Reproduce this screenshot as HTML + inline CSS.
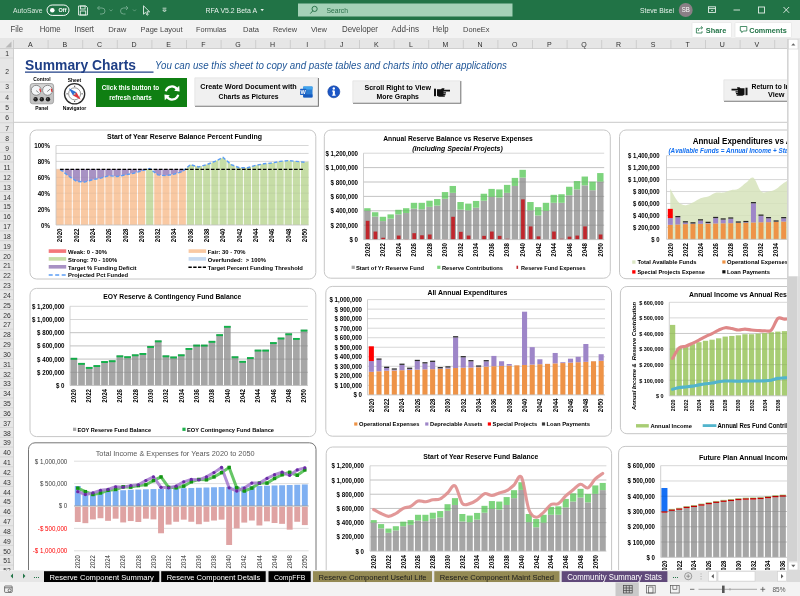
<!DOCTYPE html>
<html><head><meta charset="utf-8"><title>RFA V5.2 Beta A - Excel</title>
<style>
html,body{margin:0;padding:0;background:#fff;}
body{width:800px;height:596px;overflow:hidden;position:relative;font-family:"Liberation Sans", sans-serif;}
svg text{font-family:"Liberation Sans", sans-serif;}
#app{position:absolute;left:0;top:0;width:800px;height:596px;overflow:hidden;background:#fff;}
.abs{position:absolute;}
svg{will-change:transform;}
#titlebar{left:0;top:0;width:800px;height:20px;background:#217346;}
#ribbon{left:0;top:20px;width:800px;height:18.3px;background:#f3f3f3;}
#colhdr{left:0;top:38.3px;width:800px;height:10.5px;background:#e6e6e6;border-bottom:1px solid #cfcfcf;box-sizing:border-box;}
#rowhdr{left:0;top:48.8px;width:14px;height:521.6px;background:#e6e6e6;border-right:1px solid #cfcfcf;box-sizing:border-box;}
#tabbar{left:0;top:570px;width:800px;height:12px;background:#e6e6e6;}
#status{left:0;top:582px;width:800px;height:14px;background:#f3f3f3;}
.tab{position:absolute;top:1px;height:10px;line-height:10px;font-size:8.6px;text-align:center;white-space:nowrap;overflow:hidden;}
</style></head>
<body><div id="app">
<div id="sheet" class="abs" style="left:0;top:0;width:800px;height:596px;"><svg class="abs" style="left:0;top:0" width="800" height="596" viewBox="0 0 800 596"><defs><clipPath id="sheetclip"><rect x="14" y="49" width="773" height="521"/></clipPath></defs><g clip-path="url(#sheetclip)"><text x="25.00" y="70.30" text-anchor="start" fill="#1f3f86" style="white-space:pre;font-size:14.90px;font-weight:bold;" textLength="111.00" lengthAdjust="spacingAndGlyphs">Summary Charts</text><line x1="25" x2="153.5" y1="72.1" y2="72.1" stroke="#1f3f86" stroke-width="1.3"/><text x="155.00" y="69.40" text-anchor="start" fill="#1f5597" style="white-space:pre;font-size:10.23px;font-style:italic;" textLength="352.00" lengthAdjust="spacingAndGlyphs">You can use this sheet to copy and paste tables and charts into other applications</text><line x1="14" x2="787" y1="122.3" y2="122.3" stroke="#c8c8c8" stroke-width="1"/><text x="42.00" y="81.30" text-anchor="middle" fill="#000" style="white-space:pre;font-size:5.17px;font-weight:bold;" textLength="17.50" lengthAdjust="spacingAndGlyphs">Control</text><text x="41.80" y="110.20" text-anchor="middle" fill="#000" style="white-space:pre;font-size:5.23px;font-weight:bold;" textLength="13.30" lengthAdjust="spacingAndGlyphs">Panel</text><rect x="30.2" y="83.5" width="23.4" height="20.3" rx="2.5" fill="#c2c2c2" stroke="#9a9a9a" stroke-width="0.8"/><rect x="31" y="84.2" width="21.8" height="9" rx="2" fill="#d4d4d4"/><circle cx="36.2" cy="90.3" r="5" fill="#f4f6f8" stroke="#8a8a8a" stroke-width="1"/><circle cx="47.6" cy="90.3" r="5" fill="#f4f6f8" stroke="#8a8a8a" stroke-width="1"/><path d="M39.8,88.6 L40.6,91.8" stroke="#e03030" stroke-width="1.2"/><path d="M51.2,88.6 L52,91.8" stroke="#e03030" stroke-width="1.2"/><line x1="36.2" y1="90.6" x2="38.6" y2="92.6" stroke="#555" stroke-width="0.7"/><line x1="47.2" y1="91.6" x2="50" y2="89.2" stroke="#555" stroke-width="0.7"/><circle cx="35.6" cy="99.2" r="2.2" fill="#1e1e1e"/><circle cx="35.1" cy="98.7" r="0.7" fill="#666"/><circle cx="41.8" cy="99.2" r="2.2" fill="#1e1e1e"/><circle cx="41.3" cy="98.7" r="0.7" fill="#666"/><circle cx="48" cy="99.2" r="2.2" fill="#1e1e1e"/><circle cx="47.5" cy="98.7" r="0.7" fill="#666"/><text x="74.50" y="81.80" text-anchor="middle" fill="#000" style="white-space:pre;font-size:5.21px;font-weight:bold;" textLength="13.50" lengthAdjust="spacingAndGlyphs">Sheet</text><text x="74.50" y="110.20" text-anchor="middle" fill="#000" style="white-space:pre;font-size:5.35px;font-weight:bold;" textLength="23.50" lengthAdjust="spacingAndGlyphs">Navigator</text><circle cx="74.6" cy="93.8" r="10.1" fill="#fff" stroke="#2b2b2b" stroke-width="1.3"/><circle cx="74.6" cy="93.8" r="6" fill="none" stroke="#8a8a8a" stroke-width="0.9"/><rect x="74.0" y="85.7" width="1.2" height="1.2" fill="#555"/><rect x="74.0" y="100.7" width="1.2" height="1.2" fill="#555"/><rect x="66.5" y="93.2" width="1.2" height="1.2" fill="#555"/><rect x="81.5" y="93.2" width="1.2" height="1.2" fill="#555"/><path d="M68.8,88.3 L76.4,92.2 L73,95.6 Z" fill="#2f6fd6"/><path d="M80.6,99.6 L73,95.6 L76.4,92.2 Z" fill="#e0333f"/><circle cx="74.7" cy="93.9" r="0.9" fill="#fff" stroke="#444" stroke-width="0.4"/><rect x="96" y="78" width="91" height="29" fill="#0f7f12"/><text x="130.50" y="90.20" text-anchor="middle" fill="#fff" style="white-space:pre;font-size:6.67px;font-weight:bold;" textLength="57.50" lengthAdjust="spacingAndGlyphs">Click this button to</text><text x="130.50" y="100.20" text-anchor="middle" fill="#fff" style="white-space:pre;font-size:6.69px;font-weight:bold;" textLength="42.50" lengthAdjust="spacingAndGlyphs">refresh charts</text><g fill="none" stroke="#fff" stroke-width="2.3"><path d="M165.8,91.2 A6.2,6.2 0 0 1 177.2,89.6"/><path d="M178.2,94.8 A6.2,6.2 0 0 1 166.8,96.4"/></g><path d="M174.2,90.8 L179.6,91.4 L179.2,85.8 Z" fill="#fff"/><path d="M169.8,95.2 L164.4,94.6 L164.8,100.2 Z" fill="#fff"/><rect x="195" y="78" width="123.2" height="28" fill="#f0f0f0"/><path d="M195,106.2 H318.4 V78" fill="none" stroke="#777" stroke-width="1.05"/><path d="M194.8,106 V77.8 H318" fill="none" stroke="#e2e2e2" stroke-width="0.8"/><text x="248.50" y="88.80" text-anchor="middle" fill="#000" style="white-space:pre;font-size:7.58px;font-weight:bold;" textLength="96.50" lengthAdjust="spacingAndGlyphs">Create Word Document with</text><text x="248.50" y="99.00" text-anchor="middle" fill="#000" style="white-space:pre;font-size:7.17px;font-weight:bold;" textLength="60.00" lengthAdjust="spacingAndGlyphs">Charts as Pictures</text><rect x="303.2" y="86.5" width="9.3" height="10.9" rx="0.8" fill="#2b7cd3"/><rect x="303.2" y="86.5" width="9.3" height="3" fill="#41a5ee"/><rect x="303.2" y="94.4" width="9.3" height="3" fill="#185abd"/><rect x="300.1" y="88.8" width="6.1" height="6.1" rx="0.5" fill="#1d62c4"/><text x="303.15" y="93.90" text-anchor="middle" fill="#fff" style="white-space:pre;font-size:5.60px;font-weight:bold;">W</text><circle cx="333.8" cy="91.8" r="6" fill="#1b56c6"/><circle cx="333.8" cy="91.8" r="6" fill="none" stroke="#0d3a96" stroke-width="0.6"/><rect x="332.8" y="90.6" width="2.1" height="4.8" fill="#fff"/><circle cx="333.8" cy="88.5" r="1.2" fill="#fff"/><rect x="332" y="90.6" width="2" height="0.9" fill="#fff"/><rect x="331.9" y="94.7" width="3.9" height="0.9" fill="#fff"/><rect x="353" y="81" width="107.5" height="22" fill="#f0f0f0"/><path d="M353,103.2 H460.8 V81" fill="none" stroke="#777" stroke-width="1.05"/><path d="M352.8,103 V80.8 H460.5" fill="none" stroke="#e2e2e2" stroke-width="0.8"/><text x="397.70" y="90.20" text-anchor="middle" fill="#000" style="white-space:pre;font-size:7.45px;font-weight:bold;" textLength="66.50" lengthAdjust="spacingAndGlyphs">Scroll Right to View</text><text x="397.70" y="98.60" text-anchor="middle" fill="#000" style="white-space:pre;font-size:7.24px;font-weight:bold;" textLength="42.50" lengthAdjust="spacingAndGlyphs">More Graphs</text><g transform="translate(434,88.2)" fill="#111"><rect x="0" y="0.5" width="2" height="7.5"/><path d="M3,1 H7 L8,0 H10.5 L10,1.6 H16 V3.4 H9.5 V4 H12 V5.4 H9.5 V5.8 H11.5 V7.1 H9.3 V7.4 H10.8 V8.6 H5 L3,7.6 Z"/></g><rect x="724" y="80" width="80" height="21" fill="#f0f0f0"/><path d="M724,101.2 H804" fill="none" stroke="#777" stroke-width="1.05"/><path d="M723.8,101 V79.8 H804" fill="none" stroke="#e2e2e2" stroke-width="0.8"/><g transform="translate(747.5,87.2) scale(-1,1)" fill="#111"><rect x="0" y="0.5" width="2" height="7.5"/><path d="M3,1 H7 L8,0 H10.5 L10,1.6 H16 V3.4 H9.5 V4 H12 V5.4 H9.5 V5.8 H11.5 V7.1 H9.3 V7.4 H10.8 V8.6 H5 L3,7.6 Z"/></g><text x="751.50" y="88.80" text-anchor="start" fill="#000" style="white-space:pre;font-size:7.16px;font-weight:bold;" textLength="50.00" lengthAdjust="spacingAndGlyphs">Return to Index</text><text x="784.50" y="96.80" text-anchor="end" fill="#000" style="white-space:pre;font-size:7.66px;font-weight:bold;" textLength="16.50" lengthAdjust="spacingAndGlyphs">View</text><g id="chart1"><rect x="30" y="130" width="285.8" height="149" rx="6.5" ry="6.5" fill="#fff" stroke="#c6c6c6" stroke-width="1"/><text x="184.50" y="138.80" text-anchor="middle" fill="#000" style="white-space:pre;font-size:7.29px;font-weight:bold;" textLength="155.00" lengthAdjust="spacingAndGlyphs">Start of Year Reserve Balance Percent Funding</text><line x1="56.00" x2="308.60" y1="217.05" y2="217.05" stroke="#d2d2d2" stroke-width="0.9"/><line x1="56.00" x2="308.60" y1="209.10" y2="209.10" stroke="#d2d2d2" stroke-width="0.9"/><line x1="56.00" x2="308.60" y1="201.15" y2="201.15" stroke="#d2d2d2" stroke-width="0.9"/><line x1="56.00" x2="308.60" y1="193.20" y2="193.20" stroke="#d2d2d2" stroke-width="0.9"/><line x1="56.00" x2="308.60" y1="185.25" y2="185.25" stroke="#d2d2d2" stroke-width="0.9"/><line x1="56.00" x2="308.60" y1="177.30" y2="177.30" stroke="#d2d2d2" stroke-width="0.9"/><line x1="56.00" x2="308.60" y1="169.35" y2="169.35" stroke="#d2d2d2" stroke-width="0.9"/><line x1="56.00" x2="308.60" y1="161.40" y2="161.40" stroke="#d2d2d2" stroke-width="0.9"/><line x1="56.00" x2="308.60" y1="153.45" y2="153.45" stroke="#d2d2d2" stroke-width="0.9"/><line x1="56.00" x2="308.60" y1="145.50" y2="145.50" stroke="#d2d2d2" stroke-width="0.9"/><text x="50.00" y="227.50" text-anchor="end" fill="#000" style="white-space:pre;font-size:6.47px;font-weight:bold;" textLength="8.90" lengthAdjust="spacingAndGlyphs">0%</text><text x="50.00" y="211.60" text-anchor="end" fill="#000" style="white-space:pre;font-size:6.47px;font-weight:bold;" textLength="12.33" lengthAdjust="spacingAndGlyphs">20%</text><text x="50.00" y="195.70" text-anchor="end" fill="#000" style="white-space:pre;font-size:6.47px;font-weight:bold;" textLength="12.33" lengthAdjust="spacingAndGlyphs">40%</text><text x="50.00" y="179.80" text-anchor="end" fill="#000" style="white-space:pre;font-size:6.47px;font-weight:bold;" textLength="12.33" lengthAdjust="spacingAndGlyphs">60%</text><text x="50.00" y="163.90" text-anchor="end" fill="#000" style="white-space:pre;font-size:6.47px;font-weight:bold;" textLength="12.33" lengthAdjust="spacingAndGlyphs">80%</text><text x="50.00" y="148.00" text-anchor="end" fill="#000" style="white-space:pre;font-size:6.47px;font-weight:bold;" textLength="15.75" lengthAdjust="spacingAndGlyphs">100%</text><path d="M56.00,225.0 L56.00,169.35 L60.07,169.35 L64.15,172.53 L64.15,225.0 Z" fill="#f9c9a3"/><path d="M56.00,169.35 L64.15,169.35 L64.15,172.53 L60.07,169.35 L56.00,169.35 Z" fill="#a892c4"/><path d="M64.15,225.0 L64.15,172.53 L68.22,175.71 L72.30,178.49 L72.30,225.0 Z" fill="#f9c9a3"/><path d="M64.15,169.35 L72.30,169.35 L72.30,178.49 L68.22,175.71 L64.15,172.53 Z" fill="#a892c4"/><path d="M72.30,225.0 L72.30,178.49 L76.37,181.28 L80.45,181.67 L80.45,225.0 Z" fill="#f9c9a3"/><path d="M72.30,169.35 L80.45,169.35 L80.45,181.67 L76.37,181.28 L72.30,178.49 Z" fill="#a892c4"/><path d="M80.45,225.0 L80.45,181.67 L84.52,182.07 L88.59,180.88 L88.59,225.0 Z" fill="#f9c9a3"/><path d="M80.45,169.35 L88.59,169.35 L88.59,180.88 L84.52,182.07 L80.45,181.67 Z" fill="#a892c4"/><path d="M88.59,225.0 L88.59,180.88 L92.67,179.69 L96.74,178.89 L96.74,225.0 Z" fill="#f9c9a3"/><path d="M88.59,169.35 L96.74,169.35 L96.74,178.89 L92.67,179.69 L88.59,180.88 Z" fill="#a892c4"/><path d="M96.74,225.0 L96.74,178.89 L100.82,178.09 L104.89,176.90 L104.89,225.0 Z" fill="#f9c9a3"/><path d="M96.74,169.35 L104.89,169.35 L104.89,176.90 L100.82,178.09 L96.74,178.89 Z" fill="#a892c4"/><path d="M104.89,225.0 L104.89,176.90 L108.96,175.71 L113.04,176.11 L113.04,225.0 Z" fill="#f9c9a3"/><path d="M104.89,169.35 L113.04,169.35 L113.04,176.11 L108.96,175.71 L104.89,176.90 Z" fill="#a892c4"/><path d="M113.04,225.0 L113.04,176.11 L117.11,176.50 L121.19,175.71 L121.19,225.0 Z" fill="#f9c9a3"/><path d="M113.04,169.35 L121.19,169.35 L121.19,175.71 L117.11,176.50 L113.04,176.11 Z" fill="#a892c4"/><path d="M121.19,225.0 L121.19,175.71 L125.26,174.91 L129.34,174.12 L129.34,225.0 Z" fill="#f9c9a3"/><path d="M121.19,169.35 L129.34,169.35 L129.34,174.12 L125.26,174.91 L121.19,175.71 Z" fill="#a892c4"/><path d="M129.34,225.0 L129.34,174.12 L133.41,173.32 L137.48,172.13 L137.48,225.0 Z" fill="#f9c9a3"/><path d="M129.34,169.35 L137.48,169.35 L137.48,172.13 L133.41,173.32 L129.34,174.12 Z" fill="#a892c4"/><path d="M137.48,225.0 L137.48,172.13 L141.56,170.94 L145.63,169.75 L145.63,225.0 Z" fill="#f9c9a3"/><path d="M137.48,169.35 L145.63,169.35 L145.63,169.75 L141.56,170.94 L137.48,172.13 Z" fill="#a892c4"/><path d="M145.63,225.0 L145.63,169.75 L149.71,168.56 L153.78,171.74 L153.78,225.0 Z" fill="#c6dda6"/><path d="M153.78,225.0 L153.78,171.74 L157.85,174.91 L161.93,175.31 L161.93,225.0 Z" fill="#f9c9a3"/><path d="M153.78,169.35 L161.93,169.35 L161.93,175.31 L157.85,174.91 L153.78,171.74 Z" fill="#a892c4"/><path d="M161.93,225.0 L161.93,175.31 L166.00,175.71 L170.08,174.91 L170.08,225.0 Z" fill="#f9c9a3"/><path d="M161.93,169.35 L170.08,169.35 L170.08,174.91 L166.00,175.71 L161.93,175.31 Z" fill="#a892c4"/><path d="M170.08,225.0 L170.08,174.91 L174.15,174.12 L178.23,172.93 L178.23,225.0 Z" fill="#f9c9a3"/><path d="M170.08,169.35 L178.23,169.35 L178.23,172.93 L174.15,174.12 L170.08,174.91 Z" fill="#a892c4"/><path d="M178.23,225.0 L178.23,172.93 L182.30,171.74 L186.37,169.35 L186.37,225.0 Z" fill="#f9c9a3"/><path d="M178.23,169.35 L186.37,169.35 L186.37,169.35 L182.30,171.74 L178.23,172.93 Z" fill="#a892c4"/><path d="M186.37,225.0 L186.37,168.16 L190.45,164.58 L194.52,165.77 L194.52,225.0 Z" fill="#c6dda6"/><path d="M194.52,225.0 L194.52,165.77 L198.60,166.96 L202.67,165.77 L202.67,225.0 Z" fill="#c6dda6"/><path d="M202.67,225.0 L202.67,165.77 L206.75,164.58 L210.82,162.99 L210.82,225.0 Z" fill="#c6dda6"/><path d="M210.82,225.0 L210.82,162.99 L214.89,161.40 L218.97,159.41 L218.97,225.0 Z" fill="#c6dda6"/><path d="M218.97,225.0 L218.97,159.41 L223.04,157.43 L227.12,161.00 L227.12,225.0 Z" fill="#c6dda6"/><path d="M227.12,225.0 L227.12,161.00 L231.19,164.58 L235.26,166.17 L235.26,225.0 Z" fill="#c6dda6"/><path d="M235.26,225.0 L235.26,166.17 L239.34,167.76 L243.41,167.76 L243.41,225.0 Z" fill="#c6dda6"/><path d="M243.41,225.0 L243.41,167.76 L247.49,167.76 L251.56,166.57 L251.56,225.0 Z" fill="#c6dda6"/><path d="M251.56,225.0 L251.56,166.57 L255.64,165.38 L259.71,164.58 L259.71,225.0 Z" fill="#c6dda6"/><path d="M259.71,225.0 L259.71,164.58 L263.78,163.78 L267.86,163.39 L267.86,225.0 Z" fill="#c6dda6"/><path d="M267.86,225.0 L267.86,163.39 L271.93,162.99 L276.01,162.19 L276.01,225.0 Z" fill="#c6dda6"/><path d="M276.01,225.0 L276.01,162.19 L280.08,161.40 L284.15,161.00 L284.15,225.0 Z" fill="#c6dda6"/><path d="M284.15,225.0 L284.15,161.00 L288.23,160.61 L292.30,161.00 L292.30,225.0 Z" fill="#c6dda6"/><path d="M292.30,225.0 L292.30,161.00 L296.38,161.40 L300.45,161.80 L300.45,225.0 Z" fill="#c6dda6"/><path d="M300.45,225.0 L300.45,161.80 L304.53,162.19 L308.60,161.80 L308.60,225.0 Z" fill="#c6dda6"/><line x1="64.15" x2="64.15" y1="169.35" y2="225.0" stroke="#fff" stroke-width="0.95" stroke-opacity="0.9"/><line x1="72.30" x2="72.30" y1="169.35" y2="225.0" stroke="#fff" stroke-width="0.95" stroke-opacity="0.9"/><line x1="80.45" x2="80.45" y1="169.35" y2="225.0" stroke="#fff" stroke-width="0.95" stroke-opacity="0.9"/><line x1="88.59" x2="88.59" y1="169.35" y2="225.0" stroke="#fff" stroke-width="0.95" stroke-opacity="0.9"/><line x1="96.74" x2="96.74" y1="169.35" y2="225.0" stroke="#fff" stroke-width="0.95" stroke-opacity="0.9"/><line x1="104.89" x2="104.89" y1="169.35" y2="225.0" stroke="#fff" stroke-width="0.95" stroke-opacity="0.9"/><line x1="113.04" x2="113.04" y1="169.35" y2="225.0" stroke="#fff" stroke-width="0.95" stroke-opacity="0.9"/><line x1="121.19" x2="121.19" y1="169.35" y2="225.0" stroke="#fff" stroke-width="0.95" stroke-opacity="0.9"/><line x1="129.34" x2="129.34" y1="169.35" y2="225.0" stroke="#fff" stroke-width="0.95" stroke-opacity="0.9"/><line x1="137.48" x2="137.48" y1="169.35" y2="225.0" stroke="#fff" stroke-width="0.95" stroke-opacity="0.9"/><line x1="145.63" x2="145.63" y1="169.35" y2="225.0" stroke="#fff" stroke-width="0.95" stroke-opacity="0.9"/><line x1="153.78" x2="153.78" y1="169.35" y2="225.0" stroke="#fff" stroke-width="0.95" stroke-opacity="0.9"/><line x1="161.93" x2="161.93" y1="169.35" y2="225.0" stroke="#fff" stroke-width="0.95" stroke-opacity="0.9"/><line x1="170.08" x2="170.08" y1="169.35" y2="225.0" stroke="#fff" stroke-width="0.95" stroke-opacity="0.9"/><line x1="178.23" x2="178.23" y1="169.35" y2="225.0" stroke="#fff" stroke-width="0.95" stroke-opacity="0.9"/><line x1="186.37" x2="186.37" y1="168.16" y2="225.0" stroke="#fff" stroke-width="0.95" stroke-opacity="0.9"/><line x1="194.52" x2="194.52" y1="165.77" y2="225.0" stroke="#fff" stroke-width="0.95" stroke-opacity="0.9"/><line x1="202.67" x2="202.67" y1="165.77" y2="225.0" stroke="#fff" stroke-width="0.95" stroke-opacity="0.9"/><line x1="210.82" x2="210.82" y1="162.99" y2="225.0" stroke="#fff" stroke-width="0.95" stroke-opacity="0.9"/><line x1="218.97" x2="218.97" y1="159.41" y2="225.0" stroke="#fff" stroke-width="0.95" stroke-opacity="0.9"/><line x1="227.12" x2="227.12" y1="161.00" y2="225.0" stroke="#fff" stroke-width="0.95" stroke-opacity="0.9"/><line x1="235.26" x2="235.26" y1="166.17" y2="225.0" stroke="#fff" stroke-width="0.95" stroke-opacity="0.9"/><line x1="243.41" x2="243.41" y1="167.76" y2="225.0" stroke="#fff" stroke-width="0.95" stroke-opacity="0.9"/><line x1="251.56" x2="251.56" y1="166.57" y2="225.0" stroke="#fff" stroke-width="0.95" stroke-opacity="0.9"/><line x1="259.71" x2="259.71" y1="164.58" y2="225.0" stroke="#fff" stroke-width="0.95" stroke-opacity="0.9"/><line x1="267.86" x2="267.86" y1="163.39" y2="225.0" stroke="#fff" stroke-width="0.95" stroke-opacity="0.9"/><line x1="276.01" x2="276.01" y1="162.19" y2="225.0" stroke="#fff" stroke-width="0.95" stroke-opacity="0.9"/><line x1="284.15" x2="284.15" y1="161.00" y2="225.0" stroke="#fff" stroke-width="0.95" stroke-opacity="0.9"/><line x1="292.30" x2="292.30" y1="161.00" y2="225.0" stroke="#fff" stroke-width="0.95" stroke-opacity="0.9"/><line x1="300.45" x2="300.45" y1="161.80" y2="225.0" stroke="#fff" stroke-width="0.95" stroke-opacity="0.9"/><line x1="56.00" x2="308.60" y1="217.05" y2="217.05" stroke="rgba(110,110,110,0.10)" stroke-width="0.9"/><line x1="56.00" x2="308.60" y1="209.10" y2="209.10" stroke="rgba(110,110,110,0.10)" stroke-width="0.9"/><line x1="56.00" x2="308.60" y1="201.15" y2="201.15" stroke="rgba(110,110,110,0.10)" stroke-width="0.9"/><line x1="56.00" x2="308.60" y1="193.20" y2="193.20" stroke="rgba(110,110,110,0.10)" stroke-width="0.9"/><line x1="56.00" x2="308.60" y1="185.25" y2="185.25" stroke="rgba(110,110,110,0.10)" stroke-width="0.9"/><line x1="56.00" x2="308.60" y1="177.30" y2="177.30" stroke="rgba(110,110,110,0.10)" stroke-width="0.9"/><path d="M60.07,169.35 L68.22,175.71 L76.37,181.28 L84.52,182.07 L92.67,179.69 L100.82,178.09 L108.96,175.71 L117.11,176.50 L125.26,174.91 L133.41,173.32 L141.56,170.94 L149.71,168.56 L157.85,174.91 L166.00,175.71 L174.15,174.12 L182.30,171.74 L190.45,164.58 L198.60,166.97 L206.75,164.58 L214.89,161.40 L223.04,157.43 L231.19,164.58 L239.34,167.76 L247.49,167.76 L255.64,165.38 L263.78,163.78 L271.93,162.99 L280.08,161.40 L288.23,160.61 L296.38,161.40 L304.53,162.19" fill="none" stroke="#5b9df5" stroke-width="1.4" stroke-dasharray="3.5 2"/><line x1="60.07" x2="304.53" y1="169.35" y2="169.35" stroke="#000" stroke-width="1.4" stroke-dasharray="3.6 1.6"/><line x1="56.0" x2="308.6" y1="225.0" y2="225.0" stroke="#bfbfbf" stroke-width="0.8"/><line x1="56.0" x2="56.0" y1="145.5" y2="225.0" stroke="#c4c4c4" stroke-width="0.8"/><text x="62.37" y="228.50" text-anchor="end" fill="#000" style="white-space:pre;font-size:6.47px;font-weight:bold;" textLength="13.70" lengthAdjust="spacingAndGlyphs" transform="rotate(-90 62.37 228.50)">2020</text><text x="78.67" y="228.50" text-anchor="end" fill="#000" style="white-space:pre;font-size:6.47px;font-weight:bold;" textLength="13.70" lengthAdjust="spacingAndGlyphs" transform="rotate(-90 78.67 228.50)">2022</text><text x="94.97" y="228.50" text-anchor="end" fill="#000" style="white-space:pre;font-size:6.47px;font-weight:bold;" textLength="13.70" lengthAdjust="spacingAndGlyphs" transform="rotate(-90 94.97 228.50)">2024</text><text x="111.26" y="228.50" text-anchor="end" fill="#000" style="white-space:pre;font-size:6.47px;font-weight:bold;" textLength="13.70" lengthAdjust="spacingAndGlyphs" transform="rotate(-90 111.26 228.50)">2026</text><text x="127.56" y="228.50" text-anchor="end" fill="#000" style="white-space:pre;font-size:6.47px;font-weight:bold;" textLength="13.70" lengthAdjust="spacingAndGlyphs" transform="rotate(-90 127.56 228.50)">2028</text><text x="143.86" y="228.50" text-anchor="end" fill="#000" style="white-space:pre;font-size:6.47px;font-weight:bold;" textLength="13.70" lengthAdjust="spacingAndGlyphs" transform="rotate(-90 143.86 228.50)">2030</text><text x="160.15" y="228.50" text-anchor="end" fill="#000" style="white-space:pre;font-size:6.47px;font-weight:bold;" textLength="13.70" lengthAdjust="spacingAndGlyphs" transform="rotate(-90 160.15 228.50)">2032</text><text x="176.45" y="228.50" text-anchor="end" fill="#000" style="white-space:pre;font-size:6.47px;font-weight:bold;" textLength="13.70" lengthAdjust="spacingAndGlyphs" transform="rotate(-90 176.45 228.50)">2034</text><text x="192.75" y="228.50" text-anchor="end" fill="#000" style="white-space:pre;font-size:6.47px;font-weight:bold;" textLength="13.70" lengthAdjust="spacingAndGlyphs" transform="rotate(-90 192.75 228.50)">2036</text><text x="209.05" y="228.50" text-anchor="end" fill="#000" style="white-space:pre;font-size:6.47px;font-weight:bold;" textLength="13.70" lengthAdjust="spacingAndGlyphs" transform="rotate(-90 209.05 228.50)">2038</text><text x="225.34" y="228.50" text-anchor="end" fill="#000" style="white-space:pre;font-size:6.47px;font-weight:bold;" textLength="13.70" lengthAdjust="spacingAndGlyphs" transform="rotate(-90 225.34 228.50)">2040</text><text x="241.64" y="228.50" text-anchor="end" fill="#000" style="white-space:pre;font-size:6.47px;font-weight:bold;" textLength="13.70" lengthAdjust="spacingAndGlyphs" transform="rotate(-90 241.64 228.50)">2042</text><text x="257.94" y="228.50" text-anchor="end" fill="#000" style="white-space:pre;font-size:6.47px;font-weight:bold;" textLength="13.70" lengthAdjust="spacingAndGlyphs" transform="rotate(-90 257.94 228.50)">2044</text><text x="274.23" y="228.50" text-anchor="end" fill="#000" style="white-space:pre;font-size:6.47px;font-weight:bold;" textLength="13.70" lengthAdjust="spacingAndGlyphs" transform="rotate(-90 274.23 228.50)">2046</text><text x="290.53" y="228.50" text-anchor="end" fill="#000" style="white-space:pre;font-size:6.47px;font-weight:bold;" textLength="13.70" lengthAdjust="spacingAndGlyphs" transform="rotate(-90 290.53 228.50)">2048</text><text x="306.83" y="228.50" text-anchor="end" fill="#000" style="white-space:pre;font-size:6.47px;font-weight:bold;" textLength="13.70" lengthAdjust="spacingAndGlyphs" transform="rotate(-90 306.83 228.50)">2050</text><rect x="48.70" y="249.30" width="17.50" height="3.60" fill="#f4777b"/><text x="68.00" y="253.80" text-anchor="start" fill="#000" style="white-space:pre;font-size:6.14px;font-weight:bold;" textLength="38.92" lengthAdjust="spacingAndGlyphs">Weak: 0 - 30%</text><rect x="188.60" y="249.30" width="17.50" height="3.60" fill="#f9c9a3"/><text x="207.80" y="253.80" text-anchor="start" fill="#000" style="white-space:pre;font-size:6.14px;font-weight:bold;" textLength="37.73" lengthAdjust="spacingAndGlyphs">Fair: 30 - 70%</text><rect x="48.70" y="257.10" width="17.50" height="3.60" fill="#c6dda6"/><text x="68.00" y="261.60" text-anchor="start" fill="#000" style="white-space:pre;font-size:6.14px;font-weight:bold;" textLength="49.10" lengthAdjust="spacingAndGlyphs">Strong: 70 - 100%</text><rect x="188.60" y="257.10" width="17.50" height="3.60" fill="#c5d9f1"/><text x="207.80" y="261.60" text-anchor="start" fill="#000" style="white-space:pre;font-size:6.14px;font-weight:bold;" textLength="58.05" lengthAdjust="spacingAndGlyphs">Overfunded:  &gt; 100%</text><rect x="48.70" y="265.00" width="17.50" height="3.60" fill="#a892c4"/><text x="68.00" y="269.50" text-anchor="start" fill="#000" style="white-space:pre;font-size:6.14px;font-weight:bold;" textLength="68.48" lengthAdjust="spacingAndGlyphs">Target % Funding Deficit</text><line x1="188.4" x2="206" y1="267.2" y2="267.2" stroke="#000" stroke-width="1.4" stroke-dasharray="3.4 1.4"/><text x="207.80" y="269.50" text-anchor="start" fill="#000" style="white-space:pre;font-size:6.14px;font-weight:bold;" textLength="95.15" lengthAdjust="spacingAndGlyphs">Target Percent Funding Threshold</text><line x1="48.7" x2="66" y1="275.0" y2="275.0" stroke="#5b9df5" stroke-width="1.4" stroke-dasharray="4 2.5"/><text x="68.00" y="277.30" text-anchor="start" fill="#000" style="white-space:pre;font-size:6.14px;font-weight:bold;" textLength="60.15" lengthAdjust="spacingAndGlyphs">Projected Pct Funded</text></g><g id="chart2"><rect x="324.3" y="130" width="285.99999999999994" height="148.2" rx="6.5" ry="6.5" fill="#fff" stroke="#c6c6c6" stroke-width="1"/><text x="458.00" y="140.60" text-anchor="middle" fill="#000" style="white-space:pre;font-size:7.08px;font-weight:bold;" textLength="149.50" lengthAdjust="spacingAndGlyphs">Annual Reserve Balance vs Reserve Expenses</text><text x="457.50" y="150.60" text-anchor="middle" fill="#000" style="white-space:pre;font-size:7.25px;font-weight:bold;font-style:italic;" textLength="90.50" lengthAdjust="spacingAndGlyphs">(Including Special Projects)</text><line x1="363.50" x2="604.20" y1="225.20" y2="225.20" stroke="#d2d2d2" stroke-width="0.9"/><line x1="363.50" x2="604.20" y1="210.80" y2="210.80" stroke="#d2d2d2" stroke-width="0.9"/><line x1="363.50" x2="604.20" y1="196.40" y2="196.40" stroke="#d2d2d2" stroke-width="0.9"/><line x1="363.50" x2="604.20" y1="182.00" y2="182.00" stroke="#d2d2d2" stroke-width="0.9"/><line x1="363.50" x2="604.20" y1="167.60" y2="167.60" stroke="#d2d2d2" stroke-width="0.9"/><line x1="363.50" x2="604.20" y1="153.20" y2="153.20" stroke="#d2d2d2" stroke-width="0.9"/><text x="358.00" y="242.10" text-anchor="end" fill="#000" style="white-space:pre;font-size:6.47px;font-weight:bold;" textLength="8.56" lengthAdjust="spacingAndGlyphs">$ 0</text><text x="358.00" y="227.70" text-anchor="end" fill="#000" style="white-space:pre;font-size:6.47px;font-weight:bold;" textLength="27.40" lengthAdjust="spacingAndGlyphs">$ 200,000</text><text x="358.00" y="213.30" text-anchor="end" fill="#000" style="white-space:pre;font-size:6.47px;font-weight:bold;" textLength="27.40" lengthAdjust="spacingAndGlyphs">$ 400,000</text><text x="358.00" y="198.90" text-anchor="end" fill="#000" style="white-space:pre;font-size:6.47px;font-weight:bold;" textLength="27.40" lengthAdjust="spacingAndGlyphs">$ 600,000</text><text x="358.00" y="184.50" text-anchor="end" fill="#000" style="white-space:pre;font-size:6.47px;font-weight:bold;" textLength="27.40" lengthAdjust="spacingAndGlyphs">$ 800,000</text><text x="358.00" y="170.10" text-anchor="end" fill="#000" style="white-space:pre;font-size:6.47px;font-weight:bold;" textLength="32.54" lengthAdjust="spacingAndGlyphs">$ 1,000,000</text><text x="358.00" y="155.70" text-anchor="end" fill="#000" style="white-space:pre;font-size:6.47px;font-weight:bold;" textLength="32.54" lengthAdjust="spacingAndGlyphs">$ 1,200,000</text><rect x="364.18" y="210.87" width="6.40" height="28.73" fill="#a6a6a6"/><rect x="364.18" y="208.21" width="6.40" height="2.66" fill="#7dd47d"/><rect x="365.78" y="220.81" width="3.70" height="18.79" fill="#c0272d"/><rect x="371.95" y="216.56" width="6.40" height="23.04" fill="#a6a6a6"/><rect x="371.95" y="212.24" width="6.40" height="4.32" fill="#7dd47d"/><rect x="373.55" y="231.54" width="3.70" height="8.06" fill="#c0272d"/><rect x="379.71" y="221.10" width="6.40" height="18.50" fill="#a6a6a6"/><rect x="379.71" y="216.78" width="6.40" height="4.32" fill="#7dd47d"/><rect x="381.31" y="237.73" width="3.70" height="1.87" fill="#c0272d"/><rect x="387.48" y="218.65" width="6.40" height="20.95" fill="#a6a6a6"/><rect x="387.48" y="214.40" width="6.40" height="4.25" fill="#7dd47d"/><rect x="389.08" y="239.10" width="3.70" height="0.50" fill="#c0272d"/><rect x="395.24" y="214.40" width="6.40" height="25.20" fill="#a6a6a6"/><rect x="395.24" y="209.79" width="6.40" height="4.61" fill="#7dd47d"/><rect x="396.84" y="235.57" width="3.70" height="4.03" fill="#c0272d"/><rect x="403.00" y="213.03" width="6.40" height="26.57" fill="#a6a6a6"/><rect x="403.00" y="208.21" width="6.40" height="4.82" fill="#7dd47d"/><rect x="404.60" y="239.10" width="3.70" height="0.50" fill="#c0272d"/><rect x="410.77" y="208.71" width="6.40" height="30.89" fill="#a6a6a6"/><rect x="410.77" y="202.81" width="6.40" height="5.90" fill="#7dd47d"/><rect x="412.37" y="233.19" width="3.70" height="6.41" fill="#c0272d"/><rect x="418.53" y="209.29" width="6.40" height="30.31" fill="#a6a6a6"/><rect x="418.53" y="202.81" width="6.40" height="6.48" fill="#7dd47d"/><rect x="420.13" y="235.28" width="3.70" height="4.32" fill="#c0272d"/><rect x="426.30" y="206.84" width="6.40" height="32.76" fill="#a6a6a6"/><rect x="426.30" y="200.72" width="6.40" height="6.12" fill="#7dd47d"/><rect x="427.90" y="234.49" width="3.70" height="5.11" fill="#c0272d"/><rect x="434.06" y="205.54" width="6.40" height="34.06" fill="#a6a6a6"/><rect x="434.06" y="199.06" width="6.40" height="6.48" fill="#7dd47d"/><rect x="435.66" y="239.31" width="3.70" height="0.29" fill="#c0272d"/><rect x="441.83" y="198.78" width="6.40" height="40.82" fill="#a6a6a6"/><rect x="441.83" y="192.08" width="6.40" height="6.70" fill="#7dd47d"/><rect x="443.43" y="239.31" width="3.70" height="0.29" fill="#c0272d"/><rect x="449.59" y="192.87" width="6.40" height="46.73" fill="#a6a6a6"/><rect x="449.59" y="185.96" width="6.40" height="6.91" fill="#7dd47d"/><rect x="451.19" y="216.78" width="3.70" height="22.82" fill="#c0272d"/><rect x="457.36" y="209.58" width="6.40" height="30.02" fill="#a6a6a6"/><rect x="457.36" y="202.02" width="6.40" height="7.56" fill="#7dd47d"/><rect x="458.96" y="231.82" width="3.70" height="7.78" fill="#c0272d"/><rect x="465.12" y="210.37" width="6.40" height="29.23" fill="#a6a6a6"/><rect x="465.12" y="203.60" width="6.40" height="6.77" fill="#7dd47d"/><rect x="466.72" y="235.57" width="3.70" height="4.03" fill="#c0272d"/><rect x="472.89" y="207.70" width="6.40" height="31.90" fill="#a6a6a6"/><rect x="472.89" y="200.94" width="6.40" height="6.77" fill="#7dd47d"/><rect x="480.65" y="200.72" width="6.40" height="38.88" fill="#a6a6a6"/><rect x="480.65" y="193.74" width="6.40" height="6.98" fill="#7dd47d"/><rect x="482.25" y="235.86" width="3.70" height="3.74" fill="#c0272d"/><rect x="488.41" y="196.90" width="6.40" height="42.70" fill="#a6a6a6"/><rect x="488.41" y="188.91" width="6.40" height="7.99" fill="#7dd47d"/><rect x="490.01" y="231.54" width="3.70" height="8.06" fill="#c0272d"/><rect x="496.18" y="197.48" width="6.40" height="42.12" fill="#a6a6a6"/><rect x="496.18" y="189.42" width="6.40" height="8.06" fill="#7dd47d"/><rect x="497.78" y="235.86" width="3.70" height="3.74" fill="#c0272d"/><rect x="503.94" y="192.87" width="6.40" height="46.73" fill="#a6a6a6"/><rect x="503.94" y="184.88" width="6.40" height="7.99" fill="#7dd47d"/><rect x="505.54" y="238.81" width="3.70" height="0.79" fill="#c0272d"/><rect x="511.71" y="185.96" width="6.40" height="53.64" fill="#a6a6a6"/><rect x="511.71" y="177.90" width="6.40" height="8.06" fill="#7dd47d"/><rect x="519.47" y="177.61" width="6.40" height="61.99" fill="#a6a6a6"/><rect x="519.47" y="169.83" width="6.40" height="7.78" fill="#7dd47d"/><rect x="521.07" y="199.35" width="3.70" height="40.25" fill="#c0272d"/><rect x="527.24" y="210.37" width="6.40" height="29.23" fill="#a6a6a6"/><rect x="527.24" y="202.02" width="6.40" height="8.35" fill="#7dd47d"/><rect x="528.84" y="226.42" width="3.70" height="13.18" fill="#c0272d"/><rect x="535.00" y="215.48" width="6.40" height="24.12" fill="#a6a6a6"/><rect x="535.00" y="207.13" width="6.40" height="8.35" fill="#7dd47d"/><rect x="536.60" y="236.36" width="3.70" height="3.24" fill="#c0272d"/><rect x="542.77" y="210.87" width="6.40" height="28.73" fill="#a6a6a6"/><rect x="542.77" y="202.81" width="6.40" height="8.06" fill="#7dd47d"/><rect x="550.53" y="202.81" width="6.40" height="36.79" fill="#a6a6a6"/><rect x="550.53" y="194.82" width="6.40" height="7.99" fill="#7dd47d"/><rect x="552.13" y="231.54" width="3.70" height="8.06" fill="#c0272d"/><rect x="558.30" y="202.81" width="6.40" height="36.79" fill="#a6a6a6"/><rect x="558.30" y="194.24" width="6.40" height="8.57" fill="#7dd47d"/><rect x="559.90" y="238.81" width="3.70" height="0.79" fill="#c0272d"/><rect x="566.06" y="195.32" width="6.40" height="44.28" fill="#a6a6a6"/><rect x="566.06" y="186.75" width="6.40" height="8.57" fill="#7dd47d"/><rect x="567.66" y="236.65" width="3.70" height="2.95" fill="#c0272d"/><rect x="573.82" y="189.42" width="6.40" height="50.18" fill="#a6a6a6"/><rect x="573.82" y="181.06" width="6.40" height="8.35" fill="#7dd47d"/><rect x="575.42" y="235.57" width="3.70" height="4.03" fill="#c0272d"/><rect x="581.59" y="185.38" width="6.40" height="54.22" fill="#a6a6a6"/><rect x="581.59" y="176.53" width="6.40" height="8.86" fill="#7dd47d"/><rect x="583.19" y="226.42" width="3.70" height="13.18" fill="#c0272d"/><rect x="589.35" y="190.21" width="6.40" height="49.39" fill="#a6a6a6"/><rect x="589.35" y="181.64" width="6.40" height="8.57" fill="#7dd47d"/><rect x="597.12" y="181.64" width="6.40" height="57.96" fill="#a6a6a6"/><rect x="597.12" y="173.07" width="6.40" height="8.57" fill="#7dd47d"/><rect x="598.72" y="234.49" width="3.70" height="5.11" fill="#c0272d"/><line x1="363.50" x2="604.20" y1="225.20" y2="225.20" stroke="rgba(0,0,0,0.10)" stroke-width="0.9"/><line x1="363.50" x2="604.20" y1="210.80" y2="210.80" stroke="rgba(0,0,0,0.10)" stroke-width="0.9"/><line x1="363.50" x2="604.20" y1="196.40" y2="196.40" stroke="rgba(0,0,0,0.10)" stroke-width="0.9"/><line x1="363.50" x2="604.20" y1="182.00" y2="182.00" stroke="rgba(0,0,0,0.10)" stroke-width="0.9"/><line x1="363.50" x2="604.20" y1="167.60" y2="167.60" stroke="rgba(0,0,0,0.10)" stroke-width="0.9"/><line x1="363.5" x2="604.2" y1="239.6" y2="239.6" stroke="#bfbfbf" stroke-width="0.8"/><line x1="363.5" x2="363.5" y1="153.2" y2="239.6" stroke="#c4c4c4" stroke-width="0.8"/><text x="369.68" y="243.00" text-anchor="end" fill="#000" style="white-space:pre;font-size:6.47px;font-weight:bold;" textLength="13.70" lengthAdjust="spacingAndGlyphs" transform="rotate(-90 369.68 243.00)">2020</text><text x="385.21" y="243.00" text-anchor="end" fill="#000" style="white-space:pre;font-size:6.47px;font-weight:bold;" textLength="13.70" lengthAdjust="spacingAndGlyphs" transform="rotate(-90 385.21 243.00)">2022</text><text x="400.74" y="243.00" text-anchor="end" fill="#000" style="white-space:pre;font-size:6.47px;font-weight:bold;" textLength="13.70" lengthAdjust="spacingAndGlyphs" transform="rotate(-90 400.74 243.00)">2024</text><text x="416.27" y="243.00" text-anchor="end" fill="#000" style="white-space:pre;font-size:6.47px;font-weight:bold;" textLength="13.70" lengthAdjust="spacingAndGlyphs" transform="rotate(-90 416.27 243.00)">2026</text><text x="431.80" y="243.00" text-anchor="end" fill="#000" style="white-space:pre;font-size:6.47px;font-weight:bold;" textLength="13.70" lengthAdjust="spacingAndGlyphs" transform="rotate(-90 431.80 243.00)">2028</text><text x="447.33" y="243.00" text-anchor="end" fill="#000" style="white-space:pre;font-size:6.47px;font-weight:bold;" textLength="13.70" lengthAdjust="spacingAndGlyphs" transform="rotate(-90 447.33 243.00)">2030</text><text x="462.86" y="243.00" text-anchor="end" fill="#000" style="white-space:pre;font-size:6.47px;font-weight:bold;" textLength="13.70" lengthAdjust="spacingAndGlyphs" transform="rotate(-90 462.86 243.00)">2032</text><text x="478.39" y="243.00" text-anchor="end" fill="#000" style="white-space:pre;font-size:6.47px;font-weight:bold;" textLength="13.70" lengthAdjust="spacingAndGlyphs" transform="rotate(-90 478.39 243.00)">2034</text><text x="493.91" y="243.00" text-anchor="end" fill="#000" style="white-space:pre;font-size:6.47px;font-weight:bold;" textLength="13.70" lengthAdjust="spacingAndGlyphs" transform="rotate(-90 493.91 243.00)">2036</text><text x="509.44" y="243.00" text-anchor="end" fill="#000" style="white-space:pre;font-size:6.47px;font-weight:bold;" textLength="13.70" lengthAdjust="spacingAndGlyphs" transform="rotate(-90 509.44 243.00)">2038</text><text x="524.97" y="243.00" text-anchor="end" fill="#000" style="white-space:pre;font-size:6.47px;font-weight:bold;" textLength="13.70" lengthAdjust="spacingAndGlyphs" transform="rotate(-90 524.97 243.00)">2040</text><text x="540.50" y="243.00" text-anchor="end" fill="#000" style="white-space:pre;font-size:6.47px;font-weight:bold;" textLength="13.70" lengthAdjust="spacingAndGlyphs" transform="rotate(-90 540.50 243.00)">2042</text><text x="556.03" y="243.00" text-anchor="end" fill="#000" style="white-space:pre;font-size:6.47px;font-weight:bold;" textLength="13.70" lengthAdjust="spacingAndGlyphs" transform="rotate(-90 556.03 243.00)">2044</text><text x="571.56" y="243.00" text-anchor="end" fill="#000" style="white-space:pre;font-size:6.47px;font-weight:bold;" textLength="13.70" lengthAdjust="spacingAndGlyphs" transform="rotate(-90 571.56 243.00)">2046</text><text x="587.09" y="243.00" text-anchor="end" fill="#000" style="white-space:pre;font-size:6.47px;font-weight:bold;" textLength="13.70" lengthAdjust="spacingAndGlyphs" transform="rotate(-90 587.09 243.00)">2048</text><text x="602.62" y="243.00" text-anchor="end" fill="#000" style="white-space:pre;font-size:6.47px;font-weight:bold;" textLength="13.70" lengthAdjust="spacingAndGlyphs" transform="rotate(-90 602.62 243.00)">2050</text><rect x="351.60" y="265.70" width="3.20" height="3.20" fill="#a6a6a6"/><text x="356.00" y="269.70" text-anchor="start" fill="#000" style="white-space:pre;font-size:6.10px;font-weight:bold;" textLength="68.00" lengthAdjust="spacingAndGlyphs">Start of Yr Reserve Fund</text><rect x="437.20" y="265.70" width="3.20" height="3.20" fill="#7dd47d"/><text x="442.00" y="269.70" text-anchor="start" fill="#000" style="white-space:pre;font-size:5.97px;font-weight:bold;" textLength="61.00" lengthAdjust="spacingAndGlyphs">Reserve Contributions</text><rect x="516.50" y="265.70" width="1.60" height="3.20" fill="#c0272d"/><text x="521.00" y="269.70" text-anchor="start" fill="#000" style="white-space:pre;font-size:5.86px;font-weight:bold;" textLength="64.50" lengthAdjust="spacingAndGlyphs">Reserve Fund Expenses</text></g><g id="chart3"><rect x="619.5" y="130" width="280.5" height="148.7" rx="6.5" ry="6.5" fill="#fff" stroke="#c6c6c6" stroke-width="1"/><text x="692.70" y="144.00" text-anchor="start" fill="#000" style="white-space:pre;font-size:8.40px;font-weight:bold;" textLength="150.51" lengthAdjust="spacingAndGlyphs">Annual Expenditures vs Annual Income</text><text x="668.50" y="153.40" text-anchor="start" fill="#1470f0" style="white-space:pre;font-size:6.70px;font-weight:bold;font-style:italic;" textLength="175.24" lengthAdjust="spacingAndGlyphs">(Available Funds = Annual Income + Start of Year Balance)</text><line x1="666.50" x2="900.86" y1="227.36" y2="227.36" stroke="#d2d2d2" stroke-width="0.9"/><line x1="666.50" x2="900.86" y1="215.41" y2="215.41" stroke="#d2d2d2" stroke-width="0.9"/><line x1="666.50" x2="900.86" y1="203.47" y2="203.47" stroke="#d2d2d2" stroke-width="0.9"/><line x1="666.50" x2="900.86" y1="191.53" y2="191.53" stroke="#d2d2d2" stroke-width="0.9"/><line x1="666.50" x2="900.86" y1="179.59" y2="179.59" stroke="#d2d2d2" stroke-width="0.9"/><line x1="666.50" x2="900.86" y1="167.64" y2="167.64" stroke="#d2d2d2" stroke-width="0.9"/><line x1="666.50" x2="900.86" y1="155.70" y2="155.70" stroke="#d2d2d2" stroke-width="0.9"/><path d="M670.28,188.84 C671.54,190.93 675.32,198.66 677.84,201.38 C680.36,204.10 682.88,204.95 685.40,205.14 C687.92,205.33 690.44,203.65 692.96,202.52 C695.48,201.38 698.00,199.32 700.52,198.34 C703.04,197.35 705.56,197.55 708.08,196.60 C710.60,195.66 713.12,193.34 715.64,192.66 C718.16,191.99 720.68,192.95 723.20,192.54 C725.72,192.14 728.24,190.84 730.76,190.21 C733.28,189.59 735.80,190.01 738.32,188.78 C740.84,187.56 743.36,184.72 745.88,182.87 C748.40,181.02 750.92,176.28 753.44,177.67 C755.96,179.07 758.48,188.91 761.00,191.23 C763.52,193.55 766.04,191.95 768.56,191.59 C771.08,191.23 773.60,190.51 776.12,189.08 C778.64,187.65 781.16,184.58 783.68,182.99 C786.20,181.40 788.72,180.07 791.24,179.53 C793.76,178.98 796.28,180.36 798.80,179.71 C801.32,179.05 803.84,177.28 806.36,175.58 C808.88,173.89 811.40,171.76 813.92,169.55 C816.44,167.34 818.96,159.05 821.48,162.33 C824.00,165.60 826.52,184.06 829.04,189.20 C831.56,194.34 834.08,193.17 836.60,193.14 C839.12,193.11 841.64,190.87 844.16,189.02 C846.68,187.17 849.20,183.25 851.72,182.03 C854.24,180.82 856.76,182.87 859.28,181.74 C861.80,180.60 864.32,177.18 866.84,175.23 C869.36,173.28 871.88,171.50 874.40,170.03 C876.92,168.56 879.44,166.39 881.96,166.39 C884.48,166.39 887.00,170.68 889.52,170.03 C892.04,169.38 895.82,163.76 897.08,162.51 L897.08,239.3 L670.28,239.3 Z" fill="#d5e2ba" fill-opacity="0.84"/><text x="659.60" y="241.65" text-anchor="end" fill="#000" style="white-space:pre;font-size:6.50px;font-weight:bold;" textLength="8.31" lengthAdjust="spacingAndGlyphs">$ 0</text><text x="659.60" y="229.71" text-anchor="end" fill="#000" style="white-space:pre;font-size:6.50px;font-weight:bold;" textLength="26.60" lengthAdjust="spacingAndGlyphs">$ 200,000</text><text x="659.60" y="217.76" text-anchor="end" fill="#000" style="white-space:pre;font-size:6.50px;font-weight:bold;" textLength="26.60" lengthAdjust="spacingAndGlyphs">$ 400,000</text><text x="659.60" y="205.82" text-anchor="end" fill="#000" style="white-space:pre;font-size:6.50px;font-weight:bold;" textLength="26.60" lengthAdjust="spacingAndGlyphs">$ 600,000</text><text x="659.60" y="193.88" text-anchor="end" fill="#000" style="white-space:pre;font-size:6.50px;font-weight:bold;" textLength="26.60" lengthAdjust="spacingAndGlyphs">$ 800,000</text><text x="659.60" y="181.94" text-anchor="end" fill="#000" style="white-space:pre;font-size:6.50px;font-weight:bold;" textLength="31.59" lengthAdjust="spacingAndGlyphs">$ 1,000,000</text><text x="659.60" y="169.99" text-anchor="end" fill="#000" style="white-space:pre;font-size:6.50px;font-weight:bold;" textLength="31.59" lengthAdjust="spacingAndGlyphs">$ 1,200,000</text><text x="659.60" y="158.05" text-anchor="end" fill="#000" style="white-space:pre;font-size:6.50px;font-weight:bold;" textLength="31.59" lengthAdjust="spacingAndGlyphs">$ 1,400,000</text><rect x="667.78" y="224.85" width="5.00" height="14.45" fill="#ee9347"/><rect x="667.78" y="218.10" width="5.00" height="6.75" fill="#9e86c8"/><rect x="667.78" y="208.85" width="5.00" height="9.26" fill="#ff0000"/><rect x="675.34" y="224.49" width="5.00" height="14.81" fill="#ee9347"/><rect x="675.34" y="217.27" width="5.00" height="7.23" fill="#9e86c8"/><rect x="675.34" y="216.02" width="5.00" height="1.25" fill="#262626"/><rect x="682.90" y="224.13" width="5.00" height="15.17" fill="#ee9347"/><rect x="682.90" y="222.46" width="5.00" height="1.67" fill="#9e86c8"/><rect x="682.90" y="221.21" width="5.00" height="1.25" fill="#262626"/><rect x="690.46" y="224.01" width="5.00" height="15.29" fill="#ee9347"/><rect x="690.46" y="223.48" width="5.00" height="0.54" fill="#9e86c8"/><rect x="690.46" y="222.23" width="5.00" height="1.25" fill="#262626"/><rect x="698.02" y="223.83" width="5.00" height="15.47" fill="#ee9347"/><rect x="698.02" y="220.49" width="5.00" height="3.34" fill="#9e86c8"/><rect x="698.02" y="219.24" width="5.00" height="1.25" fill="#262626"/><rect x="705.58" y="223.65" width="5.00" height="15.65" fill="#ee9347"/><rect x="705.58" y="223.00" width="5.00" height="0.66" fill="#9e86c8"/><rect x="705.58" y="221.75" width="5.00" height="1.25" fill="#262626"/><rect x="713.14" y="223.48" width="5.00" height="15.82" fill="#ee9347"/><rect x="713.14" y="218.10" width="5.00" height="5.37" fill="#9e86c8"/><rect x="713.14" y="216.85" width="5.00" height="1.25" fill="#262626"/><rect x="720.70" y="223.30" width="5.00" height="16.00" fill="#ee9347"/><rect x="720.70" y="219.59" width="5.00" height="3.70" fill="#9e86c8"/><rect x="720.70" y="218.34" width="5.00" height="1.25" fill="#262626"/><rect x="728.26" y="223.18" width="5.00" height="16.12" fill="#ee9347"/><rect x="728.26" y="218.64" width="5.00" height="4.54" fill="#9e86c8"/><rect x="728.26" y="217.39" width="5.00" height="1.25" fill="#262626"/><rect x="735.82" y="223.00" width="5.00" height="16.30" fill="#ee9347"/><rect x="735.82" y="222.64" width="5.00" height="0.36" fill="#9e86c8"/><rect x="735.82" y="221.39" width="5.00" height="1.25" fill="#262626"/><rect x="743.38" y="222.82" width="5.00" height="16.48" fill="#ee9347"/><rect x="743.38" y="222.16" width="5.00" height="0.66" fill="#9e86c8"/><rect x="743.38" y="220.91" width="5.00" height="1.25" fill="#262626"/><rect x="750.94" y="222.46" width="5.00" height="16.84" fill="#ee9347"/><rect x="750.94" y="203.29" width="5.00" height="19.17" fill="#9e86c8"/><rect x="750.94" y="202.04" width="5.00" height="1.25" fill="#262626"/><rect x="758.50" y="222.28" width="5.00" height="17.02" fill="#ee9347"/><rect x="758.50" y="215.77" width="5.00" height="6.51" fill="#9e86c8"/><rect x="758.50" y="214.52" width="5.00" height="1.25" fill="#262626"/><rect x="766.06" y="222.16" width="5.00" height="17.14" fill="#ee9347"/><rect x="766.06" y="218.28" width="5.00" height="3.88" fill="#9e86c8"/><rect x="766.06" y="217.03" width="5.00" height="1.25" fill="#262626"/><rect x="773.62" y="221.98" width="5.00" height="17.32" fill="#ee9347"/><rect x="773.62" y="221.62" width="5.00" height="0.36" fill="#9e86c8"/><rect x="773.62" y="220.37" width="5.00" height="1.25" fill="#262626"/><rect x="781.18" y="221.56" width="5.00" height="17.74" fill="#ee9347"/><rect x="781.18" y="218.28" width="5.00" height="3.28" fill="#9e86c8"/><rect x="781.18" y="217.03" width="5.00" height="1.25" fill="#262626"/><rect x="788.74" y="221.33" width="5.00" height="17.97" fill="#ee9347"/><rect x="788.74" y="214.88" width="5.00" height="6.45" fill="#9e86c8"/><rect x="796.30" y="221.15" width="5.00" height="18.15" fill="#ee9347"/><rect x="796.30" y="218.22" width="5.00" height="2.93" fill="#9e86c8"/><rect x="803.86" y="220.97" width="5.00" height="18.33" fill="#ee9347"/><rect x="803.86" y="219.95" width="5.00" height="1.02" fill="#9e86c8"/><rect x="811.42" y="220.79" width="5.00" height="18.51" fill="#ee9347"/><rect x="811.42" y="220.73" width="5.00" height="0.06" fill="#9e86c8"/><rect x="818.98" y="220.55" width="5.00" height="18.75" fill="#ee9347"/><rect x="818.98" y="187.17" width="5.00" height="33.38" fill="#9e86c8"/><rect x="826.54" y="220.31" width="5.00" height="18.99" fill="#ee9347"/><rect x="826.54" y="209.38" width="5.00" height="10.93" fill="#9e86c8"/><rect x="834.10" y="220.07" width="5.00" height="19.23" fill="#ee9347"/><rect x="834.10" y="216.97" width="5.00" height="3.11" fill="#9e86c8"/><rect x="841.66" y="219.89" width="5.00" height="19.41" fill="#ee9347"/><rect x="841.66" y="219.83" width="5.00" height="0.06" fill="#9e86c8"/><rect x="849.22" y="219.53" width="5.00" height="19.77" fill="#ee9347"/><rect x="849.22" y="213.03" width="5.00" height="6.51" fill="#9e86c8"/><rect x="856.78" y="219.36" width="5.00" height="19.94" fill="#ee9347"/><rect x="856.78" y="218.82" width="5.00" height="0.54" fill="#9e86c8"/><rect x="864.34" y="219.06" width="5.00" height="20.24" fill="#ee9347"/><rect x="864.34" y="216.61" width="5.00" height="2.45" fill="#9e86c8"/><rect x="871.90" y="218.82" width="5.00" height="20.48" fill="#ee9347"/><rect x="871.90" y="215.41" width="5.00" height="3.40" fill="#9e86c8"/><rect x="879.46" y="218.58" width="5.00" height="20.72" fill="#ee9347"/><rect x="879.46" y="207.41" width="5.00" height="11.17" fill="#9e86c8"/><rect x="887.02" y="218.22" width="5.00" height="21.08" fill="#ee9347"/><rect x="887.02" y="218.16" width="5.00" height="0.06" fill="#9e86c8"/><rect x="894.58" y="217.92" width="5.00" height="21.38" fill="#ee9347"/><rect x="894.58" y="213.80" width="5.00" height="4.12" fill="#9e86c8"/><line x1="666.5" x2="900.86" y1="239.3" y2="239.3" stroke="#bfbfbf" stroke-width="0.8"/><line x1="666.5" x2="666.5" y1="155.7" y2="239.3" stroke="#c4c4c4" stroke-width="0.8"/><text x="672.58" y="243.00" text-anchor="end" fill="#000" style="white-space:pre;font-size:6.47px;font-weight:bold;" textLength="13.70" lengthAdjust="spacingAndGlyphs" transform="rotate(-90 672.58 243.00)">2020</text><text x="687.70" y="243.00" text-anchor="end" fill="#000" style="white-space:pre;font-size:6.47px;font-weight:bold;" textLength="13.70" lengthAdjust="spacingAndGlyphs" transform="rotate(-90 687.70 243.00)">2022</text><text x="702.82" y="243.00" text-anchor="end" fill="#000" style="white-space:pre;font-size:6.47px;font-weight:bold;" textLength="13.70" lengthAdjust="spacingAndGlyphs" transform="rotate(-90 702.82 243.00)">2024</text><text x="717.94" y="243.00" text-anchor="end" fill="#000" style="white-space:pre;font-size:6.47px;font-weight:bold;" textLength="13.70" lengthAdjust="spacingAndGlyphs" transform="rotate(-90 717.94 243.00)">2026</text><text x="733.06" y="243.00" text-anchor="end" fill="#000" style="white-space:pre;font-size:6.47px;font-weight:bold;" textLength="13.70" lengthAdjust="spacingAndGlyphs" transform="rotate(-90 733.06 243.00)">2028</text><text x="748.18" y="243.00" text-anchor="end" fill="#000" style="white-space:pre;font-size:6.47px;font-weight:bold;" textLength="13.70" lengthAdjust="spacingAndGlyphs" transform="rotate(-90 748.18 243.00)">2030</text><text x="763.30" y="243.00" text-anchor="end" fill="#000" style="white-space:pre;font-size:6.47px;font-weight:bold;" textLength="13.70" lengthAdjust="spacingAndGlyphs" transform="rotate(-90 763.30 243.00)">2032</text><text x="778.42" y="243.00" text-anchor="end" fill="#000" style="white-space:pre;font-size:6.47px;font-weight:bold;" textLength="13.70" lengthAdjust="spacingAndGlyphs" transform="rotate(-90 778.42 243.00)">2034</text><text x="793.54" y="243.00" text-anchor="end" fill="#000" style="white-space:pre;font-size:6.47px;font-weight:bold;" textLength="13.70" lengthAdjust="spacingAndGlyphs" transform="rotate(-90 793.54 243.00)">2036</text><text x="808.66" y="243.00" text-anchor="end" fill="#000" style="white-space:pre;font-size:6.47px;font-weight:bold;" textLength="13.70" lengthAdjust="spacingAndGlyphs" transform="rotate(-90 808.66 243.00)">2038</text><text x="823.78" y="243.00" text-anchor="end" fill="#000" style="white-space:pre;font-size:6.47px;font-weight:bold;" textLength="13.70" lengthAdjust="spacingAndGlyphs" transform="rotate(-90 823.78 243.00)">2040</text><text x="838.90" y="243.00" text-anchor="end" fill="#000" style="white-space:pre;font-size:6.47px;font-weight:bold;" textLength="13.70" lengthAdjust="spacingAndGlyphs" transform="rotate(-90 838.90 243.00)">2042</text><text x="854.02" y="243.00" text-anchor="end" fill="#000" style="white-space:pre;font-size:6.47px;font-weight:bold;" textLength="13.70" lengthAdjust="spacingAndGlyphs" transform="rotate(-90 854.02 243.00)">2044</text><text x="869.14" y="243.00" text-anchor="end" fill="#000" style="white-space:pre;font-size:6.47px;font-weight:bold;" textLength="13.70" lengthAdjust="spacingAndGlyphs" transform="rotate(-90 869.14 243.00)">2046</text><text x="884.26" y="243.00" text-anchor="end" fill="#000" style="white-space:pre;font-size:6.47px;font-weight:bold;" textLength="13.70" lengthAdjust="spacingAndGlyphs" transform="rotate(-90 884.26 243.00)">2048</text><text x="899.38" y="243.00" text-anchor="end" fill="#000" style="white-space:pre;font-size:6.47px;font-weight:bold;" textLength="13.70" lengthAdjust="spacingAndGlyphs" transform="rotate(-90 899.38 243.00)">2050</text><rect x="632.20" y="260.40" width="3.30" height="3.40" fill="#dbe6c4"/><text x="637.40" y="264.40" text-anchor="start" fill="#000" style="white-space:pre;font-size:6.08px;font-weight:bold;" textLength="59.00" lengthAdjust="spacingAndGlyphs">Total Available Funds</text><rect x="722.30" y="260.40" width="3.20" height="3.20" fill="#ee9347"/><text x="727.00" y="264.40" text-anchor="start" fill="#000" style="white-space:pre;font-size:6.10px;font-weight:bold;" textLength="61.00" lengthAdjust="spacingAndGlyphs">Operational Expenses</text><rect x="632.20" y="270.20" width="3.30" height="3.40" fill="#ff0000"/><text x="637.40" y="274.20" text-anchor="start" fill="#000" style="white-space:pre;font-size:5.85px;font-weight:bold;" textLength="67.50" lengthAdjust="spacingAndGlyphs">Special Projects Expense</text><rect x="722.30" y="270.20" width="3.20" height="3.20" fill="#111"/><text x="727.00" y="274.20" text-anchor="start" fill="#000" style="white-space:pre;font-size:6.11px;font-weight:bold;" textLength="43.00" lengthAdjust="spacingAndGlyphs">Loan Payments</text></g><g id="chart4"><rect x="30" y="288.4" width="285.8" height="148.20000000000005" rx="6.5" ry="6.5" fill="#fff" stroke="#c6c6c6" stroke-width="1"/><text x="172.30" y="299.40" text-anchor="middle" fill="#000" style="white-space:pre;font-size:7.09px;font-weight:bold;" textLength="138.00" lengthAdjust="spacingAndGlyphs">EOY Reserve &amp; Contingency Fund Balance</text><line x1="70.00" x2="307.90" y1="372.30" y2="372.30" stroke="#d2d2d2" stroke-width="0.9"/><line x1="70.00" x2="307.90" y1="359.10" y2="359.10" stroke="#d2d2d2" stroke-width="0.9"/><line x1="70.00" x2="307.90" y1="345.90" y2="345.90" stroke="#d2d2d2" stroke-width="0.9"/><line x1="70.00" x2="307.90" y1="332.70" y2="332.70" stroke="#d2d2d2" stroke-width="0.9"/><line x1="70.00" x2="307.90" y1="319.50" y2="319.50" stroke="#d2d2d2" stroke-width="0.9"/><line x1="70.00" x2="307.90" y1="306.30" y2="306.30" stroke="#d2d2d2" stroke-width="0.9"/><text x="64.50" y="388.00" text-anchor="end" fill="#000" style="white-space:pre;font-size:6.47px;font-weight:bold;" textLength="8.56" lengthAdjust="spacingAndGlyphs">$ 0</text><text x="64.50" y="374.80" text-anchor="end" fill="#000" style="white-space:pre;font-size:6.47px;font-weight:bold;" textLength="27.40" lengthAdjust="spacingAndGlyphs">$ 200,000</text><text x="64.50" y="361.60" text-anchor="end" fill="#000" style="white-space:pre;font-size:6.47px;font-weight:bold;" textLength="27.40" lengthAdjust="spacingAndGlyphs">$ 400,000</text><text x="64.50" y="348.40" text-anchor="end" fill="#000" style="white-space:pre;font-size:6.47px;font-weight:bold;" textLength="27.40" lengthAdjust="spacingAndGlyphs">$ 600,000</text><text x="64.50" y="335.20" text-anchor="end" fill="#000" style="white-space:pre;font-size:6.47px;font-weight:bold;" textLength="27.40" lengthAdjust="spacingAndGlyphs">$ 800,000</text><text x="64.50" y="322.00" text-anchor="end" fill="#000" style="white-space:pre;font-size:6.47px;font-weight:bold;" textLength="32.54" lengthAdjust="spacingAndGlyphs">$ 1,000,000</text><text x="64.50" y="308.80" text-anchor="end" fill="#000" style="white-space:pre;font-size:6.47px;font-weight:bold;" textLength="32.54" lengthAdjust="spacingAndGlyphs">$ 1,200,000</text><rect x="70.49" y="357.85" width="6.70" height="27.65" fill="#a6a6a6"/><rect x="70.49" y="357.85" width="6.70" height="1.90" fill="#12b24a"/><rect x="78.16" y="362.93" width="6.70" height="22.57" fill="#a6a6a6"/><rect x="78.16" y="362.93" width="6.70" height="1.90" fill="#12b24a"/><rect x="85.84" y="366.95" width="6.70" height="18.55" fill="#a6a6a6"/><rect x="85.84" y="366.95" width="6.70" height="1.90" fill="#12b24a"/><rect x="93.51" y="365.11" width="6.70" height="20.39" fill="#a6a6a6"/><rect x="93.51" y="365.11" width="6.70" height="1.90" fill="#12b24a"/><rect x="101.18" y="361.08" width="6.70" height="24.42" fill="#a6a6a6"/><rect x="101.18" y="361.08" width="6.70" height="1.90" fill="#12b24a"/><rect x="108.86" y="360.29" width="6.70" height="25.21" fill="#a6a6a6"/><rect x="108.86" y="360.29" width="6.70" height="1.90" fill="#12b24a"/><rect x="116.53" y="355.40" width="6.70" height="30.10" fill="#a6a6a6"/><rect x="116.53" y="355.40" width="6.70" height="1.90" fill="#12b24a"/><rect x="124.21" y="356.26" width="6.70" height="29.24" fill="#a6a6a6"/><rect x="124.21" y="356.26" width="6.70" height="1.90" fill="#12b24a"/><rect x="131.88" y="354.35" width="6.70" height="31.15" fill="#a6a6a6"/><rect x="131.88" y="354.35" width="6.70" height="1.90" fill="#12b24a"/><rect x="139.55" y="353.03" width="6.70" height="32.47" fill="#a6a6a6"/><rect x="139.55" y="353.03" width="6.70" height="1.90" fill="#12b24a"/><rect x="147.23" y="346.03" width="6.70" height="39.47" fill="#a6a6a6"/><rect x="147.23" y="346.03" width="6.70" height="1.90" fill="#12b24a"/><rect x="154.90" y="340.42" width="6.70" height="45.08" fill="#a6a6a6"/><rect x="154.90" y="340.42" width="6.70" height="1.90" fill="#12b24a"/><rect x="162.58" y="355.40" width="6.70" height="30.10" fill="#a6a6a6"/><rect x="162.58" y="355.40" width="6.70" height="1.90" fill="#12b24a"/><rect x="170.25" y="356.53" width="6.70" height="28.97" fill="#a6a6a6"/><rect x="170.25" y="356.53" width="6.70" height="1.90" fill="#12b24a"/><rect x="177.93" y="354.35" width="6.70" height="31.15" fill="#a6a6a6"/><rect x="177.93" y="354.35" width="6.70" height="1.90" fill="#12b24a"/><rect x="185.60" y="348.01" width="6.70" height="37.49" fill="#a6a6a6"/><rect x="185.60" y="348.01" width="6.70" height="1.90" fill="#12b24a"/><rect x="193.27" y="344.65" width="6.70" height="40.85" fill="#a6a6a6"/><rect x="193.27" y="344.65" width="6.70" height="1.90" fill="#12b24a"/><rect x="200.95" y="344.65" width="6.70" height="40.85" fill="#a6a6a6"/><rect x="200.95" y="344.65" width="6.70" height="1.90" fill="#12b24a"/><rect x="208.62" y="340.88" width="6.70" height="44.62" fill="#a6a6a6"/><rect x="208.62" y="340.88" width="6.70" height="1.90" fill="#12b24a"/><rect x="216.30" y="334.22" width="6.70" height="51.28" fill="#a6a6a6"/><rect x="216.30" y="334.22" width="6.70" height="1.90" fill="#12b24a"/><rect x="223.97" y="325.90" width="6.70" height="59.60" fill="#a6a6a6"/><rect x="223.97" y="325.90" width="6.70" height="1.90" fill="#12b24a"/><rect x="231.65" y="356.33" width="6.70" height="29.17" fill="#a6a6a6"/><rect x="231.65" y="356.33" width="6.70" height="1.90" fill="#12b24a"/><rect x="239.32" y="360.88" width="6.70" height="24.62" fill="#a6a6a6"/><rect x="239.32" y="360.88" width="6.70" height="1.90" fill="#12b24a"/><rect x="246.99" y="357.12" width="6.70" height="28.38" fill="#a6a6a6"/><rect x="246.99" y="357.12" width="6.70" height="1.90" fill="#12b24a"/><rect x="254.67" y="349.66" width="6.70" height="35.84" fill="#a6a6a6"/><rect x="254.67" y="349.66" width="6.70" height="1.90" fill="#12b24a"/><rect x="262.34" y="349.66" width="6.70" height="35.84" fill="#a6a6a6"/><rect x="262.34" y="349.66" width="6.70" height="1.90" fill="#12b24a"/><rect x="270.02" y="342.14" width="6.70" height="43.36" fill="#a6a6a6"/><rect x="270.02" y="342.14" width="6.70" height="1.90" fill="#12b24a"/><rect x="277.69" y="337.58" width="6.70" height="47.92" fill="#a6a6a6"/><rect x="277.69" y="337.58" width="6.70" height="1.90" fill="#12b24a"/><rect x="285.36" y="333.36" width="6.70" height="52.14" fill="#a6a6a6"/><rect x="285.36" y="333.36" width="6.70" height="1.90" fill="#12b24a"/><rect x="293.04" y="337.98" width="6.70" height="47.52" fill="#a6a6a6"/><rect x="293.04" y="337.98" width="6.70" height="1.90" fill="#12b24a"/><rect x="300.71" y="329.66" width="6.70" height="55.84" fill="#a6a6a6"/><rect x="300.71" y="329.66" width="6.70" height="1.90" fill="#12b24a"/><line x1="70.00" x2="307.90" y1="372.30" y2="372.30" stroke="rgba(0,0,0,0.10)" stroke-width="0.9"/><line x1="70.00" x2="307.90" y1="359.10" y2="359.10" stroke="rgba(0,0,0,0.10)" stroke-width="0.9"/><line x1="70.00" x2="307.90" y1="345.90" y2="345.90" stroke="rgba(0,0,0,0.10)" stroke-width="0.9"/><line x1="70.00" x2="307.90" y1="332.70" y2="332.70" stroke="rgba(0,0,0,0.10)" stroke-width="0.9"/><line x1="70.0" x2="307.9" y1="385.5" y2="385.5" stroke="#bfbfbf" stroke-width="0.8"/><line x1="70.0" x2="70.0" y1="306.3" y2="385.5" stroke="#c4c4c4" stroke-width="0.8"/><text x="76.14" y="389.00" text-anchor="end" fill="#000" style="white-space:pre;font-size:6.47px;font-weight:bold;" textLength="13.70" lengthAdjust="spacingAndGlyphs" transform="rotate(-90 76.14 389.00)">2020</text><text x="91.49" y="389.00" text-anchor="end" fill="#000" style="white-space:pre;font-size:6.47px;font-weight:bold;" textLength="13.70" lengthAdjust="spacingAndGlyphs" transform="rotate(-90 91.49 389.00)">2022</text><text x="106.83" y="389.00" text-anchor="end" fill="#000" style="white-space:pre;font-size:6.47px;font-weight:bold;" textLength="13.70" lengthAdjust="spacingAndGlyphs" transform="rotate(-90 106.83 389.00)">2024</text><text x="122.18" y="389.00" text-anchor="end" fill="#000" style="white-space:pre;font-size:6.47px;font-weight:bold;" textLength="13.70" lengthAdjust="spacingAndGlyphs" transform="rotate(-90 122.18 389.00)">2026</text><text x="137.53" y="389.00" text-anchor="end" fill="#000" style="white-space:pre;font-size:6.47px;font-weight:bold;" textLength="13.70" lengthAdjust="spacingAndGlyphs" transform="rotate(-90 137.53 389.00)">2028</text><text x="152.88" y="389.00" text-anchor="end" fill="#000" style="white-space:pre;font-size:6.47px;font-weight:bold;" textLength="13.70" lengthAdjust="spacingAndGlyphs" transform="rotate(-90 152.88 389.00)">2030</text><text x="168.23" y="389.00" text-anchor="end" fill="#000" style="white-space:pre;font-size:6.47px;font-weight:bold;" textLength="13.70" lengthAdjust="spacingAndGlyphs" transform="rotate(-90 168.23 389.00)">2032</text><text x="183.58" y="389.00" text-anchor="end" fill="#000" style="white-space:pre;font-size:6.47px;font-weight:bold;" textLength="13.70" lengthAdjust="spacingAndGlyphs" transform="rotate(-90 183.58 389.00)">2034</text><text x="198.92" y="389.00" text-anchor="end" fill="#000" style="white-space:pre;font-size:6.47px;font-weight:bold;" textLength="13.70" lengthAdjust="spacingAndGlyphs" transform="rotate(-90 198.92 389.00)">2036</text><text x="214.27" y="389.00" text-anchor="end" fill="#000" style="white-space:pre;font-size:6.47px;font-weight:bold;" textLength="13.70" lengthAdjust="spacingAndGlyphs" transform="rotate(-90 214.27 389.00)">2038</text><text x="229.62" y="389.00" text-anchor="end" fill="#000" style="white-space:pre;font-size:6.47px;font-weight:bold;" textLength="13.70" lengthAdjust="spacingAndGlyphs" transform="rotate(-90 229.62 389.00)">2040</text><text x="244.97" y="389.00" text-anchor="end" fill="#000" style="white-space:pre;font-size:6.47px;font-weight:bold;" textLength="13.70" lengthAdjust="spacingAndGlyphs" transform="rotate(-90 244.97 389.00)">2042</text><text x="260.32" y="389.00" text-anchor="end" fill="#000" style="white-space:pre;font-size:6.47px;font-weight:bold;" textLength="13.70" lengthAdjust="spacingAndGlyphs" transform="rotate(-90 260.32 389.00)">2044</text><text x="275.67" y="389.00" text-anchor="end" fill="#000" style="white-space:pre;font-size:6.47px;font-weight:bold;" textLength="13.70" lengthAdjust="spacingAndGlyphs" transform="rotate(-90 275.67 389.00)">2046</text><text x="291.01" y="389.00" text-anchor="end" fill="#000" style="white-space:pre;font-size:6.47px;font-weight:bold;" textLength="13.70" lengthAdjust="spacingAndGlyphs" transform="rotate(-90 291.01 389.00)">2048</text><text x="306.36" y="389.00" text-anchor="end" fill="#000" style="white-space:pre;font-size:6.47px;font-weight:bold;" textLength="13.70" lengthAdjust="spacingAndGlyphs" transform="rotate(-90 306.36 389.00)">2050</text><rect x="73.00" y="427.70" width="3.20" height="3.20" fill="#a6a6a6"/><text x="77.50" y="431.70" text-anchor="start" fill="#000" style="white-space:pre;font-size:5.89px;font-weight:bold;" textLength="73.50" lengthAdjust="spacingAndGlyphs">EOY Reserve Fund Balance</text><rect x="182.40" y="427.70" width="3.20" height="3.20" fill="#1db14b"/><text x="187.00" y="431.70" text-anchor="start" fill="#000" style="white-space:pre;font-size:5.99px;font-weight:bold;" textLength="87.00" lengthAdjust="spacingAndGlyphs">EOY Contingency Fund Balance</text></g><g id="chart5"><rect x="325.8" y="286.4" width="285.7" height="149.8" rx="6.5" ry="6.5" fill="#fff" stroke="#c6c6c6" stroke-width="1"/><text x="467.40" y="295.40" text-anchor="middle" fill="#000" style="white-space:pre;font-size:7.29px;font-weight:bold;" textLength="80.00" lengthAdjust="spacingAndGlyphs">All Annual Expenditures</text><line x1="367.50" x2="605.00" y1="385.37" y2="385.37" stroke="#d2d2d2" stroke-width="0.9"/><line x1="367.50" x2="605.00" y1="375.84" y2="375.84" stroke="#d2d2d2" stroke-width="0.9"/><line x1="367.50" x2="605.00" y1="366.31" y2="366.31" stroke="#d2d2d2" stroke-width="0.9"/><line x1="367.50" x2="605.00" y1="356.78" y2="356.78" stroke="#d2d2d2" stroke-width="0.9"/><line x1="367.50" x2="605.00" y1="347.25" y2="347.25" stroke="#d2d2d2" stroke-width="0.9"/><line x1="367.50" x2="605.00" y1="337.72" y2="337.72" stroke="#d2d2d2" stroke-width="0.9"/><line x1="367.50" x2="605.00" y1="328.19" y2="328.19" stroke="#d2d2d2" stroke-width="0.9"/><line x1="367.50" x2="605.00" y1="318.66" y2="318.66" stroke="#d2d2d2" stroke-width="0.9"/><line x1="367.50" x2="605.00" y1="309.13" y2="309.13" stroke="#d2d2d2" stroke-width="0.9"/><line x1="367.50" x2="605.00" y1="299.60" y2="299.60" stroke="#d2d2d2" stroke-width="0.9"/><text x="362.00" y="397.40" text-anchor="end" fill="#000" style="white-space:pre;font-size:6.47px;font-weight:bold;" textLength="8.56" lengthAdjust="spacingAndGlyphs">$ 0</text><text x="362.00" y="387.87" text-anchor="end" fill="#000" style="white-space:pre;font-size:6.47px;font-weight:bold;" textLength="27.40" lengthAdjust="spacingAndGlyphs">$ 100,000</text><text x="362.00" y="378.34" text-anchor="end" fill="#000" style="white-space:pre;font-size:6.47px;font-weight:bold;" textLength="27.40" lengthAdjust="spacingAndGlyphs">$ 200,000</text><text x="362.00" y="368.81" text-anchor="end" fill="#000" style="white-space:pre;font-size:6.47px;font-weight:bold;" textLength="27.40" lengthAdjust="spacingAndGlyphs">$ 300,000</text><text x="362.00" y="359.28" text-anchor="end" fill="#000" style="white-space:pre;font-size:6.47px;font-weight:bold;" textLength="27.40" lengthAdjust="spacingAndGlyphs">$ 400,000</text><text x="362.00" y="349.75" text-anchor="end" fill="#000" style="white-space:pre;font-size:6.47px;font-weight:bold;" textLength="27.40" lengthAdjust="spacingAndGlyphs">$ 500,000</text><text x="362.00" y="340.22" text-anchor="end" fill="#000" style="white-space:pre;font-size:6.47px;font-weight:bold;" textLength="27.40" lengthAdjust="spacingAndGlyphs">$ 600,000</text><text x="362.00" y="330.69" text-anchor="end" fill="#000" style="white-space:pre;font-size:6.47px;font-weight:bold;" textLength="27.40" lengthAdjust="spacingAndGlyphs">$ 700,000</text><text x="362.00" y="321.16" text-anchor="end" fill="#000" style="white-space:pre;font-size:6.47px;font-weight:bold;" textLength="27.40" lengthAdjust="spacingAndGlyphs">$ 800,000</text><text x="362.00" y="311.63" text-anchor="end" fill="#000" style="white-space:pre;font-size:6.47px;font-weight:bold;" textLength="27.40" lengthAdjust="spacingAndGlyphs">$ 900,000</text><text x="362.00" y="302.10" text-anchor="end" fill="#000" style="white-space:pre;font-size:6.47px;font-weight:bold;" textLength="32.54" lengthAdjust="spacingAndGlyphs">$ 1,000,000</text><rect x="368.78" y="371.84" width="5.10" height="23.06" fill="#ee9347"/><rect x="368.78" y="361.07" width="5.10" height="10.77" fill="#9e86c8"/><rect x="368.78" y="346.30" width="5.10" height="14.77" fill="#ff0000"/><rect x="376.44" y="371.27" width="5.10" height="23.63" fill="#ee9347"/><rect x="376.44" y="359.73" width="5.10" height="11.53" fill="#9e86c8"/><rect x="376.44" y="358.48" width="5.10" height="1.25" fill="#262626"/><rect x="384.10" y="370.69" width="5.10" height="24.21" fill="#ee9347"/><rect x="384.10" y="368.03" width="5.10" height="2.67" fill="#9e86c8"/><rect x="384.10" y="366.69" width="5.10" height="1.33" fill="#262626"/><rect x="391.76" y="370.50" width="5.10" height="24.40" fill="#ee9347"/><rect x="391.76" y="369.65" width="5.10" height="0.86" fill="#9e86c8"/><rect x="391.76" y="368.40" width="5.10" height="1.25" fill="#262626"/><rect x="399.43" y="370.22" width="5.10" height="24.68" fill="#ee9347"/><rect x="399.43" y="364.88" width="5.10" height="5.34" fill="#9e86c8"/><rect x="399.43" y="363.63" width="5.10" height="1.25" fill="#262626"/><rect x="407.09" y="369.93" width="5.10" height="24.97" fill="#ee9347"/><rect x="407.09" y="368.88" width="5.10" height="1.05" fill="#9e86c8"/><rect x="407.09" y="367.63" width="5.10" height="1.25" fill="#262626"/><rect x="414.75" y="369.65" width="5.10" height="25.25" fill="#ee9347"/><rect x="414.75" y="361.07" width="5.10" height="8.58" fill="#9e86c8"/><rect x="414.75" y="359.82" width="5.10" height="1.25" fill="#262626"/><rect x="422.41" y="369.36" width="5.10" height="25.54" fill="#ee9347"/><rect x="422.41" y="363.45" width="5.10" height="5.91" fill="#9e86c8"/><rect x="422.41" y="362.20" width="5.10" height="1.25" fill="#262626"/><rect x="430.07" y="369.17" width="5.10" height="25.73" fill="#ee9347"/><rect x="430.07" y="361.93" width="5.10" height="7.24" fill="#9e86c8"/><rect x="430.07" y="360.68" width="5.10" height="1.25" fill="#262626"/><rect x="437.73" y="368.88" width="5.10" height="26.02" fill="#ee9347"/><rect x="437.73" y="368.31" width="5.10" height="0.57" fill="#9e86c8"/><rect x="437.73" y="367.06" width="5.10" height="1.25" fill="#262626"/><rect x="445.39" y="368.60" width="5.10" height="26.30" fill="#ee9347"/><rect x="445.39" y="367.55" width="5.10" height="1.05" fill="#9e86c8"/><rect x="445.39" y="366.30" width="5.10" height="1.25" fill="#262626"/><rect x="453.05" y="368.03" width="5.10" height="26.87" fill="#ee9347"/><rect x="453.05" y="337.43" width="5.10" height="30.59" fill="#9e86c8"/><rect x="453.05" y="336.18" width="5.10" height="1.25" fill="#262626"/><rect x="460.72" y="367.74" width="5.10" height="27.16" fill="#ee9347"/><rect x="460.72" y="357.35" width="5.10" height="10.39" fill="#9e86c8"/><rect x="460.72" y="356.10" width="5.10" height="1.25" fill="#262626"/><rect x="468.38" y="367.55" width="5.10" height="27.35" fill="#ee9347"/><rect x="468.38" y="361.35" width="5.10" height="6.19" fill="#9e86c8"/><rect x="468.38" y="360.10" width="5.10" height="1.25" fill="#262626"/><rect x="476.04" y="367.26" width="5.10" height="27.64" fill="#ee9347"/><rect x="476.04" y="366.69" width="5.10" height="0.57" fill="#9e86c8"/><rect x="476.04" y="365.44" width="5.10" height="1.25" fill="#262626"/><rect x="483.70" y="366.60" width="5.10" height="28.30" fill="#ee9347"/><rect x="483.70" y="361.35" width="5.10" height="5.24" fill="#9e86c8"/><rect x="483.70" y="360.10" width="5.10" height="1.25" fill="#262626"/><rect x="491.36" y="366.21" width="5.10" height="28.69" fill="#ee9347"/><rect x="491.36" y="355.92" width="5.10" height="10.29" fill="#9e86c8"/><rect x="499.02" y="365.93" width="5.10" height="28.97" fill="#ee9347"/><rect x="499.02" y="361.26" width="5.10" height="4.67" fill="#9e86c8"/><rect x="506.68" y="365.64" width="5.10" height="29.26" fill="#ee9347"/><rect x="506.68" y="364.02" width="5.10" height="1.62" fill="#9e86c8"/><rect x="514.35" y="365.36" width="5.10" height="29.54" fill="#ee9347"/><rect x="514.35" y="365.26" width="5.10" height="0.10" fill="#9e86c8"/><rect x="522.01" y="364.98" width="5.10" height="29.92" fill="#ee9347"/><rect x="522.01" y="311.70" width="5.10" height="53.27" fill="#9e86c8"/><rect x="529.67" y="364.59" width="5.10" height="30.31" fill="#ee9347"/><rect x="529.67" y="347.15" width="5.10" height="17.44" fill="#9e86c8"/><rect x="537.33" y="364.21" width="5.10" height="30.69" fill="#ee9347"/><rect x="537.33" y="359.26" width="5.10" height="4.96" fill="#9e86c8"/><rect x="544.99" y="363.93" width="5.10" height="30.97" fill="#ee9347"/><rect x="544.99" y="363.83" width="5.10" height="0.10" fill="#9e86c8"/><rect x="552.65" y="363.36" width="5.10" height="31.54" fill="#ee9347"/><rect x="552.65" y="352.97" width="5.10" height="10.39" fill="#9e86c8"/><rect x="560.31" y="363.07" width="5.10" height="31.83" fill="#ee9347"/><rect x="560.31" y="362.21" width="5.10" height="0.86" fill="#9e86c8"/><rect x="567.97" y="362.59" width="5.10" height="32.31" fill="#ee9347"/><rect x="567.97" y="358.69" width="5.10" height="3.91" fill="#9e86c8"/><rect x="575.64" y="362.21" width="5.10" height="32.69" fill="#ee9347"/><rect x="575.64" y="356.78" width="5.10" height="5.43" fill="#9e86c8"/><rect x="583.30" y="361.83" width="5.10" height="33.07" fill="#ee9347"/><rect x="583.30" y="344.01" width="5.10" height="17.82" fill="#9e86c8"/><rect x="590.96" y="361.26" width="5.10" height="33.64" fill="#ee9347"/><rect x="590.96" y="361.16" width="5.10" height="0.10" fill="#9e86c8"/><rect x="598.62" y="360.78" width="5.10" height="34.12" fill="#ee9347"/><rect x="598.62" y="354.21" width="5.10" height="6.58" fill="#9e86c8"/><line x1="367.5" x2="605.0" y1="394.9" y2="394.9" stroke="#bfbfbf" stroke-width="0.8"/><line x1="367.5" x2="367.5" y1="299.6" y2="394.9" stroke="#c4c4c4" stroke-width="0.8"/><text x="373.63" y="398.50" text-anchor="end" fill="#000" style="white-space:pre;font-size:6.47px;font-weight:bold;" textLength="13.70" lengthAdjust="spacingAndGlyphs" transform="rotate(-90 373.63 398.50)">2020</text><text x="388.95" y="398.50" text-anchor="end" fill="#000" style="white-space:pre;font-size:6.47px;font-weight:bold;" textLength="13.70" lengthAdjust="spacingAndGlyphs" transform="rotate(-90 388.95 398.50)">2022</text><text x="404.28" y="398.50" text-anchor="end" fill="#000" style="white-space:pre;font-size:6.47px;font-weight:bold;" textLength="13.70" lengthAdjust="spacingAndGlyphs" transform="rotate(-90 404.28 398.50)">2024</text><text x="419.60" y="398.50" text-anchor="end" fill="#000" style="white-space:pre;font-size:6.47px;font-weight:bold;" textLength="13.70" lengthAdjust="spacingAndGlyphs" transform="rotate(-90 419.60 398.50)">2026</text><text x="434.92" y="398.50" text-anchor="end" fill="#000" style="white-space:pre;font-size:6.47px;font-weight:bold;" textLength="13.70" lengthAdjust="spacingAndGlyphs" transform="rotate(-90 434.92 398.50)">2028</text><text x="450.24" y="398.50" text-anchor="end" fill="#000" style="white-space:pre;font-size:6.47px;font-weight:bold;" textLength="13.70" lengthAdjust="spacingAndGlyphs" transform="rotate(-90 450.24 398.50)">2030</text><text x="465.57" y="398.50" text-anchor="end" fill="#000" style="white-space:pre;font-size:6.47px;font-weight:bold;" textLength="13.70" lengthAdjust="spacingAndGlyphs" transform="rotate(-90 465.57 398.50)">2032</text><text x="480.89" y="398.50" text-anchor="end" fill="#000" style="white-space:pre;font-size:6.47px;font-weight:bold;" textLength="13.70" lengthAdjust="spacingAndGlyphs" transform="rotate(-90 480.89 398.50)">2034</text><text x="496.21" y="398.50" text-anchor="end" fill="#000" style="white-space:pre;font-size:6.47px;font-weight:bold;" textLength="13.70" lengthAdjust="spacingAndGlyphs" transform="rotate(-90 496.21 398.50)">2036</text><text x="511.53" y="398.50" text-anchor="end" fill="#000" style="white-space:pre;font-size:6.47px;font-weight:bold;" textLength="13.70" lengthAdjust="spacingAndGlyphs" transform="rotate(-90 511.53 398.50)">2038</text><text x="526.86" y="398.50" text-anchor="end" fill="#000" style="white-space:pre;font-size:6.47px;font-weight:bold;" textLength="13.70" lengthAdjust="spacingAndGlyphs" transform="rotate(-90 526.86 398.50)">2040</text><text x="542.18" y="398.50" text-anchor="end" fill="#000" style="white-space:pre;font-size:6.47px;font-weight:bold;" textLength="13.70" lengthAdjust="spacingAndGlyphs" transform="rotate(-90 542.18 398.50)">2042</text><text x="557.50" y="398.50" text-anchor="end" fill="#000" style="white-space:pre;font-size:6.47px;font-weight:bold;" textLength="13.70" lengthAdjust="spacingAndGlyphs" transform="rotate(-90 557.50 398.50)">2044</text><text x="572.82" y="398.50" text-anchor="end" fill="#000" style="white-space:pre;font-size:6.47px;font-weight:bold;" textLength="13.70" lengthAdjust="spacingAndGlyphs" transform="rotate(-90 572.82 398.50)">2046</text><text x="588.15" y="398.50" text-anchor="end" fill="#000" style="white-space:pre;font-size:6.47px;font-weight:bold;" textLength="13.70" lengthAdjust="spacingAndGlyphs" transform="rotate(-90 588.15 398.50)">2048</text><text x="603.47" y="398.50" text-anchor="end" fill="#000" style="white-space:pre;font-size:6.47px;font-weight:bold;" textLength="13.70" lengthAdjust="spacingAndGlyphs" transform="rotate(-90 603.47 398.50)">2050</text><rect x="354.20" y="422.40" width="3.20" height="3.20" fill="#ee9347"/><text x="359.00" y="426.40" text-anchor="start" fill="#000" style="white-space:pre;font-size:6.05px;font-weight:bold;" textLength="60.50" lengthAdjust="spacingAndGlyphs">Operational Expenses</text><rect x="425.20" y="422.40" width="3.20" height="3.20" fill="#9e86c8"/><text x="430.00" y="426.40" text-anchor="start" fill="#000" style="white-space:pre;font-size:6.00px;font-weight:bold;" textLength="52.50" lengthAdjust="spacingAndGlyphs">Depreciable Assets</text><rect x="487.80" y="422.40" width="3.20" height="3.20" fill="#ff0000"/><text x="492.60" y="426.40" text-anchor="start" fill="#000" style="white-space:pre;font-size:6.05px;font-weight:bold;" textLength="44.50" lengthAdjust="spacingAndGlyphs">Special Projects</text><rect x="541.90" y="422.40" width="3.20" height="3.20" fill="#3a3a3a"/><text x="546.50" y="426.40" text-anchor="start" fill="#000" style="white-space:pre;font-size:6.18px;font-weight:bold;" textLength="43.50" lengthAdjust="spacingAndGlyphs">Loan Payments</text></g><g id="chart6"><rect x="620.4" y="286.5" width="279.6" height="147.2" rx="6.5" ry="6.5" fill="#fff" stroke="#c6c6c6" stroke-width="1"/><text x="689.00" y="297.40" text-anchor="start" fill="#000" style="white-space:pre;font-size:7.30px;font-weight:bold;" textLength="158.76" lengthAdjust="spacingAndGlyphs">Annual Income vs Annual Reserve Contributions</text><text x="635.50" y="410.00" text-anchor="start" fill="#000" style="white-space:pre;font-size:6.00px;font-weight:bold;font-style:italic;" textLength="108.00" lengthAdjust="spacingAndGlyphs" transform="rotate(-90 635.50 410.00)">Annual Income &amp;  Reserve Contribution</text><line x1="669.30" x2="900.00" y1="380.22" y2="380.22" stroke="#d2d2d2" stroke-width="0.9"/><line x1="669.30" x2="900.00" y1="364.63" y2="364.63" stroke="#d2d2d2" stroke-width="0.9"/><line x1="669.30" x2="900.00" y1="349.05" y2="349.05" stroke="#d2d2d2" stroke-width="0.9"/><line x1="669.30" x2="900.00" y1="333.47" y2="333.47" stroke="#d2d2d2" stroke-width="0.9"/><line x1="669.30" x2="900.00" y1="317.88" y2="317.88" stroke="#d2d2d2" stroke-width="0.9"/><line x1="669.30" x2="900.00" y1="302.30" y2="302.30" stroke="#d2d2d2" stroke-width="0.9"/><text x="663.50" y="398.20" text-anchor="end" fill="#000" style="white-space:pre;font-size:5.73px;font-weight:bold;" textLength="7.58" lengthAdjust="spacingAndGlyphs">$ 0</text><text x="663.50" y="382.62" text-anchor="end" fill="#000" style="white-space:pre;font-size:5.73px;font-weight:bold;" textLength="24.27" lengthAdjust="spacingAndGlyphs">$ 100,000</text><text x="663.50" y="367.03" text-anchor="end" fill="#000" style="white-space:pre;font-size:5.73px;font-weight:bold;" textLength="24.27" lengthAdjust="spacingAndGlyphs">$ 200,000</text><text x="663.50" y="351.45" text-anchor="end" fill="#000" style="white-space:pre;font-size:5.73px;font-weight:bold;" textLength="24.27" lengthAdjust="spacingAndGlyphs">$ 300,000</text><text x="663.50" y="335.87" text-anchor="end" fill="#000" style="white-space:pre;font-size:5.73px;font-weight:bold;" textLength="24.27" lengthAdjust="spacingAndGlyphs">$ 400,000</text><text x="663.50" y="320.28" text-anchor="end" fill="#000" style="white-space:pre;font-size:5.73px;font-weight:bold;" textLength="24.27" lengthAdjust="spacingAndGlyphs">$ 500,000</text><text x="663.50" y="304.70" text-anchor="end" fill="#000" style="white-space:pre;font-size:5.73px;font-weight:bold;" textLength="24.27" lengthAdjust="spacingAndGlyphs">$ 600,000</text><rect x="669.94" y="324.90" width="5.30" height="70.90" fill="#a8cd74"/><rect x="676.52" y="347.65" width="5.30" height="48.15" fill="#a8cd74"/><rect x="683.10" y="346.56" width="5.30" height="49.24" fill="#a8cd74"/><rect x="689.68" y="344.22" width="5.30" height="51.58" fill="#a8cd74"/><rect x="696.26" y="342.19" width="5.30" height="53.61" fill="#a8cd74"/><rect x="702.84" y="340.79" width="5.30" height="55.01" fill="#a8cd74"/><rect x="709.42" y="339.70" width="5.30" height="56.10" fill="#a8cd74"/><rect x="716.00" y="338.30" width="5.30" height="57.50" fill="#a8cd74"/><rect x="722.58" y="336.58" width="5.30" height="59.22" fill="#a8cd74"/><rect x="729.16" y="335.96" width="5.30" height="59.84" fill="#a8cd74"/><rect x="735.74" y="335.34" width="5.30" height="60.46" fill="#a8cd74"/><rect x="742.32" y="334.25" width="5.30" height="61.55" fill="#a8cd74"/><rect x="748.90" y="334.25" width="5.30" height="61.55" fill="#a8cd74"/><rect x="755.48" y="333.62" width="5.30" height="62.18" fill="#a8cd74"/><rect x="762.06" y="333.16" width="5.30" height="62.64" fill="#a8cd74"/><rect x="768.64" y="332.22" width="5.30" height="63.58" fill="#a8cd74"/><rect x="775.22" y="331.60" width="5.30" height="64.20" fill="#a8cd74"/><rect x="781.80" y="331.13" width="5.30" height="64.67" fill="#a8cd74"/><rect x="788.38" y="330.66" width="5.30" height="65.14" fill="#a8cd74"/><rect x="794.96" y="330.19" width="5.30" height="65.61" fill="#a8cd74"/><line x1="669.30" x2="900.00" y1="380.22" y2="380.22" stroke="rgba(0,0,0,0.07)" stroke-width="0.9"/><line x1="669.30" x2="900.00" y1="364.63" y2="364.63" stroke="rgba(0,0,0,0.07)" stroke-width="0.9"/><line x1="669.30" x2="900.00" y1="349.05" y2="349.05" stroke="rgba(0,0,0,0.07)" stroke-width="0.9"/><line x1="669.30" x2="900.00" y1="333.47" y2="333.47" stroke="rgba(0,0,0,0.07)" stroke-width="0.9"/><line x1="669.3" x2="900" y1="395.8" y2="395.8" stroke="#bfbfbf" stroke-width="0.8"/><line x1="669.3" x2="669.3" y1="302.3" y2="395.8" stroke="#c4c4c4" stroke-width="0.8"/><path d="M672.59,358.40 C673.69,356.66 676.98,349.99 679.17,347.96 C681.36,345.93 683.56,347.02 685.75,346.25 C687.94,345.47 690.14,344.32 692.33,343.28 C694.52,342.25 696.72,341.13 698.91,340.01 C701.10,338.89 703.30,337.65 705.49,336.58 C707.68,335.52 709.88,334.71 712.07,333.62 C714.26,332.53 716.46,331.03 718.65,330.04 C720.84,329.05 723.04,327.96 725.23,327.70 C727.42,327.44 729.62,328.09 731.81,328.48 C734.00,328.87 736.20,329.93 738.39,330.04 C740.58,330.14 742.78,329.10 744.97,329.10 C747.16,329.10 749.36,329.80 751.55,330.04 C753.74,330.27 755.94,330.38 758.13,330.51 C760.32,330.64 762.52,330.90 764.71,330.82 C766.90,330.74 769.10,332.09 771.29,330.04 C773.48,327.99 775.68,320.32 777.87,318.51 C780.06,316.69 782.26,319.08 784.45,319.13 C786.64,319.18 788.84,318.92 791.03,318.82 C793.22,318.71 796.51,318.56 797.61,318.51" fill="none" stroke="#df8888" stroke-width="3.1" stroke-linecap="round" stroke-linejoin="round"/><path d="M672.59,389.25 C673.69,388.97 676.98,387.93 679.17,387.54 C681.36,387.15 683.56,387.15 685.75,386.92 C687.94,386.68 690.14,386.48 692.33,386.14 C694.52,385.80 696.72,385.28 698.91,384.89 C701.10,384.50 703.30,384.11 705.49,383.80 C707.68,383.49 709.88,383.36 712.07,383.02 C714.26,382.68 716.46,382.11 718.65,381.78 C720.84,381.44 723.04,381.13 725.23,381.00 C727.42,380.87 729.62,380.94 731.81,381.00 C734.00,381.05 736.20,381.31 738.39,381.31 C740.58,381.31 742.78,381.05 744.97,381.00 C747.16,380.94 749.36,381.00 751.55,381.00 C753.74,381.00 755.94,381.02 758.13,381.00 C760.32,380.97 762.52,380.97 764.71,380.84 C766.90,380.71 769.10,380.63 771.29,380.22 C773.48,379.80 775.68,378.74 777.87,378.35 C780.06,377.96 782.26,378.01 784.45,377.88 C786.64,377.75 788.84,377.65 791.03,377.57 C793.22,377.49 796.51,377.44 797.61,377.41" fill="none" stroke="#52b4cc" stroke-width="3.1" stroke-linecap="round" stroke-linejoin="round"/><text x="674.55" y="399.50" text-anchor="end" fill="#000" style="white-space:pre;font-size:5.52px;font-weight:bold;" textLength="11.70" lengthAdjust="spacingAndGlyphs" transform="rotate(-90 674.55 399.50)">2020</text><text x="687.71" y="399.50" text-anchor="end" fill="#000" style="white-space:pre;font-size:5.52px;font-weight:bold;" textLength="11.70" lengthAdjust="spacingAndGlyphs" transform="rotate(-90 687.71 399.50)">2022</text><text x="700.87" y="399.50" text-anchor="end" fill="#000" style="white-space:pre;font-size:5.52px;font-weight:bold;" textLength="11.70" lengthAdjust="spacingAndGlyphs" transform="rotate(-90 700.87 399.50)">2024</text><text x="714.03" y="399.50" text-anchor="end" fill="#000" style="white-space:pre;font-size:5.52px;font-weight:bold;" textLength="11.70" lengthAdjust="spacingAndGlyphs" transform="rotate(-90 714.03 399.50)">2026</text><text x="727.19" y="399.50" text-anchor="end" fill="#000" style="white-space:pre;font-size:5.52px;font-weight:bold;" textLength="11.70" lengthAdjust="spacingAndGlyphs" transform="rotate(-90 727.19 399.50)">2028</text><text x="740.35" y="399.50" text-anchor="end" fill="#000" style="white-space:pre;font-size:5.52px;font-weight:bold;" textLength="11.70" lengthAdjust="spacingAndGlyphs" transform="rotate(-90 740.35 399.50)">2030</text><text x="753.51" y="399.50" text-anchor="end" fill="#000" style="white-space:pre;font-size:5.52px;font-weight:bold;" textLength="11.70" lengthAdjust="spacingAndGlyphs" transform="rotate(-90 753.51 399.50)">2032</text><text x="766.67" y="399.50" text-anchor="end" fill="#000" style="white-space:pre;font-size:5.52px;font-weight:bold;" textLength="11.70" lengthAdjust="spacingAndGlyphs" transform="rotate(-90 766.67 399.50)">2034</text><text x="779.83" y="399.50" text-anchor="end" fill="#000" style="white-space:pre;font-size:5.52px;font-weight:bold;" textLength="11.70" lengthAdjust="spacingAndGlyphs" transform="rotate(-90 779.83 399.50)">2036</text><text x="792.99" y="399.50" text-anchor="end" fill="#000" style="white-space:pre;font-size:5.52px;font-weight:bold;" textLength="11.70" lengthAdjust="spacingAndGlyphs" transform="rotate(-90 792.99 399.50)">2038</text><rect x="636.00" y="424.10" width="12.80" height="3.40" fill="#a8cd74"/><text x="650.40" y="428.00" text-anchor="start" fill="#000" style="white-space:pre;font-size:6.08px;font-weight:bold;" textLength="41.50" lengthAdjust="spacingAndGlyphs">Annual Income</text><line x1="702.7" x2="716.4" y1="425.6" y2="425.6" stroke="#52b4cc" stroke-width="2.8"/><text x="717.50" y="428.00" text-anchor="start" fill="#000" style="white-space:pre;font-size:6.28px;font-weight:bold;" textLength="90.08" lengthAdjust="spacingAndGlyphs">Annual Res Fund Contributions</text></g><g id="chart7"><rect x="28.5" y="442.8" width="287.5" height="257.2" rx="6.5" ry="6.5" fill="#fff" stroke="#757575" stroke-width="1"/><text x="175.20" y="456.00" text-anchor="middle" fill="#595959" style="white-space:pre;font-size:7.72px;" textLength="159.00" lengthAdjust="spacingAndGlyphs">Total Income &amp; Expenses for Years 2020 to 2050</text><line x1="74.00" x2="308.60" y1="461.20" y2="461.20" stroke="#dadada" stroke-width="0.9"/><line x1="74.00" x2="308.60" y1="483.60" y2="483.60" stroke="#dadada" stroke-width="0.9"/><line x1="74.00" x2="308.60" y1="528.40" y2="528.40" stroke="#dadada" stroke-width="0.9"/><line x1="74.00" x2="308.60" y1="550.80" y2="550.80" stroke="#dadada" stroke-width="0.9"/><text x="67.30" y="463.60" text-anchor="end" fill="#404040" style="white-space:pre;font-size:6.47px;" textLength="32.54" lengthAdjust="spacingAndGlyphs">$ 1,000,000</text><text x="67.30" y="486.00" text-anchor="end" fill="#404040" style="white-space:pre;font-size:6.47px;" textLength="27.40" lengthAdjust="spacingAndGlyphs">$ 500,000</text><text x="67.30" y="508.40" text-anchor="end" fill="#404040" style="white-space:pre;font-size:6.47px;" textLength="8.56" lengthAdjust="spacingAndGlyphs">$ 0</text><text x="67.30" y="530.80" text-anchor="end" fill="#ff0000" style="white-space:pre;font-size:6.47px;" textLength="29.45" lengthAdjust="spacingAndGlyphs">-$ 500,000</text><text x="67.30" y="553.20" text-anchor="end" fill="#ff0000" style="white-space:pre;font-size:6.47px;" textLength="34.59" lengthAdjust="spacingAndGlyphs">-$ 1,000,000</text><rect x="74.83" y="486.02" width="5.90" height="19.98" fill="#7fb0f2"/><rect x="74.83" y="506.80" width="5.90" height="15.19" fill="#dfa3a3"/><rect x="82.40" y="491.89" width="5.90" height="14.11" fill="#7fb0f2"/><rect x="82.40" y="506.80" width="5.90" height="16.36" fill="#dfa3a3"/><rect x="89.97" y="491.89" width="5.90" height="14.11" fill="#7fb0f2"/><rect x="89.97" y="506.80" width="5.90" height="12.60" fill="#dfa3a3"/><rect x="97.54" y="491.44" width="5.90" height="14.56" fill="#7fb0f2"/><rect x="97.54" y="506.80" width="5.90" height="11.43" fill="#dfa3a3"/><rect x="105.10" y="490.95" width="5.90" height="15.05" fill="#7fb0f2"/><rect x="105.10" y="506.80" width="5.90" height="14.03" fill="#dfa3a3"/><rect x="112.67" y="490.50" width="5.90" height="15.50" fill="#7fb0f2"/><rect x="112.67" y="506.80" width="5.90" height="11.88" fill="#dfa3a3"/><rect x="120.24" y="490.23" width="5.90" height="15.77" fill="#7fb0f2"/><rect x="120.24" y="506.80" width="5.90" height="15.64" fill="#dfa3a3"/><rect x="127.81" y="489.78" width="5.90" height="16.22" fill="#7fb0f2"/><rect x="127.81" y="506.80" width="5.90" height="14.25" fill="#dfa3a3"/><rect x="135.38" y="489.56" width="5.90" height="16.44" fill="#7fb0f2"/><rect x="135.38" y="506.80" width="5.90" height="15.19" fill="#dfa3a3"/><rect x="142.94" y="489.29" width="5.90" height="16.71" fill="#7fb0f2"/><rect x="142.94" y="506.80" width="5.90" height="11.88" fill="#dfa3a3"/><rect x="150.51" y="489.07" width="5.90" height="16.93" fill="#7fb0f2"/><rect x="150.51" y="506.80" width="5.90" height="12.60" fill="#dfa3a3"/><rect x="158.08" y="488.84" width="5.90" height="17.16" fill="#7fb0f2"/><rect x="158.08" y="506.80" width="5.90" height="26.48" fill="#dfa3a3"/><rect x="165.65" y="488.62" width="5.90" height="17.38" fill="#7fb0f2"/><rect x="165.65" y="506.80" width="5.90" height="17.79" fill="#dfa3a3"/><rect x="173.21" y="488.39" width="5.90" height="17.61" fill="#7fb0f2"/><rect x="173.21" y="506.80" width="5.90" height="14.97" fill="#dfa3a3"/><rect x="180.78" y="488.17" width="5.90" height="17.83" fill="#7fb0f2"/><rect x="180.78" y="506.80" width="5.90" height="12.86" fill="#dfa3a3"/><rect x="188.35" y="487.95" width="5.90" height="18.05" fill="#7fb0f2"/><rect x="188.35" y="506.80" width="5.90" height="14.97" fill="#dfa3a3"/><rect x="195.92" y="487.72" width="5.90" height="18.28" fill="#7fb0f2"/><rect x="195.92" y="506.80" width="5.90" height="17.43" fill="#dfa3a3"/><rect x="203.49" y="487.50" width="5.90" height="18.50" fill="#7fb0f2"/><rect x="203.49" y="506.80" width="5.90" height="14.97" fill="#dfa3a3"/><rect x="211.05" y="487.27" width="5.90" height="18.73" fill="#7fb0f2"/><rect x="211.05" y="506.80" width="5.90" height="13.72" fill="#dfa3a3"/><rect x="218.62" y="487.05" width="5.90" height="18.95" fill="#7fb0f2"/><rect x="218.62" y="506.80" width="5.90" height="12.86" fill="#dfa3a3"/><rect x="226.19" y="486.83" width="5.90" height="19.17" fill="#7fb0f2"/><rect x="226.19" y="506.80" width="5.90" height="38.18" fill="#dfa3a3"/><rect x="233.76" y="486.60" width="5.90" height="19.40" fill="#7fb0f2"/><rect x="233.76" y="506.80" width="5.90" height="21.60" fill="#dfa3a3"/><rect x="241.32" y="486.38" width="5.90" height="19.62" fill="#7fb0f2"/><rect x="241.32" y="506.80" width="5.90" height="15.78" fill="#dfa3a3"/><rect x="248.89" y="486.15" width="5.90" height="19.85" fill="#7fb0f2"/><rect x="248.89" y="506.80" width="5.90" height="13.72" fill="#dfa3a3"/><rect x="256.46" y="485.93" width="5.90" height="20.07" fill="#7fb0f2"/><rect x="256.46" y="506.80" width="5.90" height="18.69" fill="#dfa3a3"/><rect x="264.03" y="485.71" width="5.90" height="20.29" fill="#7fb0f2"/><rect x="264.03" y="506.80" width="5.90" height="14.57" fill="#dfa3a3"/><rect x="271.60" y="485.48" width="5.90" height="20.52" fill="#7fb0f2"/><rect x="271.60" y="506.80" width="5.90" height="16.22" fill="#dfa3a3"/><rect x="279.16" y="485.26" width="5.90" height="20.74" fill="#7fb0f2"/><rect x="279.16" y="506.80" width="5.90" height="17.03" fill="#dfa3a3"/><rect x="286.73" y="485.03" width="5.90" height="20.97" fill="#7fb0f2"/><rect x="286.73" y="506.80" width="5.90" height="22.85" fill="#dfa3a3"/><rect x="294.30" y="484.76" width="5.90" height="21.24" fill="#7fb0f2"/><rect x="294.30" y="506.80" width="5.90" height="14.97" fill="#dfa3a3"/><rect x="301.87" y="484.45" width="5.90" height="21.55" fill="#7fb0f2"/><rect x="301.87" y="506.80" width="5.90" height="18.28" fill="#dfa3a3"/><line x1="74.00" x2="308.60" y1="506.00" y2="506.00" stroke="#9c9c9c" stroke-width="0.9"/><path d="M77.78,488.12 L85.35,491.66 L92.92,494.49 L100.49,492.96 L108.05,490.32 L115.62,489.47 L123.19,486.78 L130.76,487.14 L138.33,485.62 L145.89,484.81 L153.46,480.60 L161.03,476.92 L168.60,487.32 L176.16,487.81 L183.73,486.15 L191.30,481.81 L198.87,479.43 L206.44,479.79 L214.00,476.92 L221.57,472.62 L229.14,467.43 L236.71,487.81 L244.27,490.99 L251.84,488.12 L259.41,483.11 L266.98,483.11 L274.55,478.45 L282.11,474.77 L289.68,472.27 L297.25,475.27 L304.82,469.94" fill="none" stroke="#55c055" stroke-width="3" stroke-linecap="round" stroke-linejoin="round" stroke-opacity="0.9"/><path d="M77.78,491.66 L85.35,494.49 L92.92,492.96 L100.49,490.32 L108.05,489.47 L115.62,486.78 L123.19,487.14 L130.76,485.62 L138.33,484.81 L145.89,480.60 L153.46,476.92 L161.03,487.32 L168.60,487.81 L176.16,486.15 L183.73,481.81 L191.30,479.43 L198.87,479.79 L206.44,476.92 L214.00,472.62 L221.57,467.43 L229.14,487.81 L236.71,490.99 L244.27,488.12 L251.84,483.11 L259.41,483.11 L266.98,478.45 L274.55,474.77 L282.11,472.27 L289.68,475.27 L297.25,469.94 L304.82,467.83" fill="none" stroke="#a97fd0" stroke-width="3" stroke-linecap="round" stroke-linejoin="round" stroke-opacity="0.9"/><rect x="76.08" y="486.42" width="3.40" height="3.40" fill="#149414"/><rect x="83.65" y="489.96" width="3.40" height="3.40" fill="#149414"/><rect x="91.22" y="492.79" width="3.40" height="3.40" fill="#149414"/><rect x="98.79" y="491.26" width="3.40" height="3.40" fill="#149414"/><rect x="106.35" y="488.62" width="3.40" height="3.40" fill="#149414"/><rect x="113.92" y="487.77" width="3.40" height="3.40" fill="#149414"/><rect x="121.49" y="485.08" width="3.40" height="3.40" fill="#149414"/><rect x="129.06" y="485.44" width="3.40" height="3.40" fill="#149414"/><rect x="136.63" y="483.92" width="3.40" height="3.40" fill="#149414"/><rect x="144.19" y="483.11" width="3.40" height="3.40" fill="#149414"/><rect x="151.76" y="478.90" width="3.40" height="3.40" fill="#149414"/><rect x="159.33" y="475.22" width="3.40" height="3.40" fill="#149414"/><rect x="166.90" y="485.62" width="3.40" height="3.40" fill="#149414"/><rect x="174.46" y="486.11" width="3.40" height="3.40" fill="#149414"/><rect x="182.03" y="484.45" width="3.40" height="3.40" fill="#149414"/><rect x="189.60" y="480.11" width="3.40" height="3.40" fill="#149414"/><rect x="197.17" y="477.73" width="3.40" height="3.40" fill="#149414"/><rect x="204.74" y="478.09" width="3.40" height="3.40" fill="#149414"/><rect x="212.30" y="475.22" width="3.40" height="3.40" fill="#149414"/><rect x="219.87" y="470.92" width="3.40" height="3.40" fill="#149414"/><rect x="227.44" y="465.73" width="3.40" height="3.40" fill="#149414"/><rect x="235.01" y="486.11" width="3.40" height="3.40" fill="#149414"/><rect x="242.57" y="489.29" width="3.40" height="3.40" fill="#149414"/><rect x="250.14" y="486.42" width="3.40" height="3.40" fill="#149414"/><rect x="257.71" y="481.41" width="3.40" height="3.40" fill="#149414"/><rect x="265.28" y="481.41" width="3.40" height="3.40" fill="#149414"/><rect x="272.85" y="476.75" width="3.40" height="3.40" fill="#149414"/><rect x="280.41" y="473.07" width="3.40" height="3.40" fill="#149414"/><rect x="287.98" y="470.57" width="3.40" height="3.40" fill="#149414"/><rect x="295.55" y="473.57" width="3.40" height="3.40" fill="#149414"/><rect x="303.12" y="468.24" width="3.40" height="3.40" fill="#149414"/><circle cx="77.78" cy="491.66" r="1.65" fill="#6a2aa5"/><circle cx="85.35" cy="494.49" r="1.65" fill="#6a2aa5"/><circle cx="92.92" cy="492.96" r="1.65" fill="#6a2aa5"/><circle cx="100.49" cy="490.32" r="1.65" fill="#6a2aa5"/><circle cx="108.05" cy="489.47" r="1.65" fill="#6a2aa5"/><circle cx="115.62" cy="486.78" r="1.65" fill="#6a2aa5"/><circle cx="123.19" cy="487.14" r="1.65" fill="#6a2aa5"/><circle cx="130.76" cy="485.62" r="1.65" fill="#6a2aa5"/><circle cx="138.33" cy="484.81" r="1.65" fill="#6a2aa5"/><circle cx="145.89" cy="480.60" r="1.65" fill="#6a2aa5"/><circle cx="153.46" cy="476.92" r="1.65" fill="#6a2aa5"/><circle cx="161.03" cy="487.32" r="1.65" fill="#6a2aa5"/><circle cx="168.60" cy="487.81" r="1.65" fill="#6a2aa5"/><circle cx="176.16" cy="486.15" r="1.65" fill="#6a2aa5"/><circle cx="183.73" cy="481.81" r="1.65" fill="#6a2aa5"/><circle cx="191.30" cy="479.43" r="1.65" fill="#6a2aa5"/><circle cx="198.87" cy="479.79" r="1.65" fill="#6a2aa5"/><circle cx="206.44" cy="476.92" r="1.65" fill="#6a2aa5"/><circle cx="214.00" cy="472.62" r="1.65" fill="#6a2aa5"/><circle cx="221.57" cy="467.43" r="1.65" fill="#6a2aa5"/><circle cx="229.14" cy="487.81" r="1.65" fill="#6a2aa5"/><circle cx="236.71" cy="490.99" r="1.65" fill="#6a2aa5"/><circle cx="244.27" cy="488.12" r="1.65" fill="#6a2aa5"/><circle cx="251.84" cy="483.11" r="1.65" fill="#6a2aa5"/><circle cx="259.41" cy="483.11" r="1.65" fill="#6a2aa5"/><circle cx="266.98" cy="478.45" r="1.65" fill="#6a2aa5"/><circle cx="274.55" cy="474.77" r="1.65" fill="#6a2aa5"/><circle cx="282.11" cy="472.27" r="1.65" fill="#6a2aa5"/><circle cx="289.68" cy="475.27" r="1.65" fill="#6a2aa5"/><circle cx="297.25" cy="469.94" r="1.65" fill="#6a2aa5"/><circle cx="304.82" cy="467.83" r="1.65" fill="#6a2aa5"/><text x="80.02" y="555.20" text-anchor="end" fill="#333" style="white-space:pre;font-size:6.28px;" textLength="13.30" lengthAdjust="spacingAndGlyphs" transform="rotate(-90 80.02 555.20)">2020</text><text x="95.15" y="555.20" text-anchor="end" fill="#333" style="white-space:pre;font-size:6.28px;" textLength="13.30" lengthAdjust="spacingAndGlyphs" transform="rotate(-90 95.15 555.20)">2022</text><text x="110.29" y="555.20" text-anchor="end" fill="#333" style="white-space:pre;font-size:6.28px;" textLength="13.30" lengthAdjust="spacingAndGlyphs" transform="rotate(-90 110.29 555.20)">2024</text><text x="125.42" y="555.20" text-anchor="end" fill="#333" style="white-space:pre;font-size:6.28px;" textLength="13.30" lengthAdjust="spacingAndGlyphs" transform="rotate(-90 125.42 555.20)">2026</text><text x="140.56" y="555.20" text-anchor="end" fill="#333" style="white-space:pre;font-size:6.28px;" textLength="13.30" lengthAdjust="spacingAndGlyphs" transform="rotate(-90 140.56 555.20)">2028</text><text x="155.69" y="555.20" text-anchor="end" fill="#333" style="white-space:pre;font-size:6.28px;" textLength="13.30" lengthAdjust="spacingAndGlyphs" transform="rotate(-90 155.69 555.20)">2030</text><text x="170.83" y="555.20" text-anchor="end" fill="#333" style="white-space:pre;font-size:6.28px;" textLength="13.30" lengthAdjust="spacingAndGlyphs" transform="rotate(-90 170.83 555.20)">2032</text><text x="185.97" y="555.20" text-anchor="end" fill="#333" style="white-space:pre;font-size:6.28px;" textLength="13.30" lengthAdjust="spacingAndGlyphs" transform="rotate(-90 185.97 555.20)">2034</text><text x="201.10" y="555.20" text-anchor="end" fill="#333" style="white-space:pre;font-size:6.28px;" textLength="13.30" lengthAdjust="spacingAndGlyphs" transform="rotate(-90 201.10 555.20)">2036</text><text x="216.24" y="555.20" text-anchor="end" fill="#333" style="white-space:pre;font-size:6.28px;" textLength="13.30" lengthAdjust="spacingAndGlyphs" transform="rotate(-90 216.24 555.20)">2038</text><text x="231.37" y="555.20" text-anchor="end" fill="#333" style="white-space:pre;font-size:6.28px;" textLength="13.30" lengthAdjust="spacingAndGlyphs" transform="rotate(-90 231.37 555.20)">2040</text><text x="246.51" y="555.20" text-anchor="end" fill="#333" style="white-space:pre;font-size:6.28px;" textLength="13.30" lengthAdjust="spacingAndGlyphs" transform="rotate(-90 246.51 555.20)">2042</text><text x="261.64" y="555.20" text-anchor="end" fill="#333" style="white-space:pre;font-size:6.28px;" textLength="13.30" lengthAdjust="spacingAndGlyphs" transform="rotate(-90 261.64 555.20)">2044</text><text x="276.78" y="555.20" text-anchor="end" fill="#333" style="white-space:pre;font-size:6.28px;" textLength="13.30" lengthAdjust="spacingAndGlyphs" transform="rotate(-90 276.78 555.20)">2046</text><text x="291.91" y="555.20" text-anchor="end" fill="#333" style="white-space:pre;font-size:6.28px;" textLength="13.30" lengthAdjust="spacingAndGlyphs" transform="rotate(-90 291.91 555.20)">2048</text><text x="307.05" y="555.20" text-anchor="end" fill="#333" style="white-space:pre;font-size:6.28px;" textLength="13.30" lengthAdjust="spacingAndGlyphs" transform="rotate(-90 307.05 555.20)">2050</text></g><g id="chart8"><rect x="326.2" y="447.0" width="285.40000000000003" height="253.0" rx="6.5" ry="6.5" fill="#fff" stroke="#c6c6c6" stroke-width="1"/><text x="480.80" y="458.60" text-anchor="middle" fill="#000" style="white-space:pre;font-size:7.15px;font-weight:bold;" textLength="115.00" lengthAdjust="spacingAndGlyphs">Start of Year Reserve Fund Balance</text><line x1="370.00" x2="606.40" y1="536.88" y2="536.88" stroke="#d2d2d2" stroke-width="0.9"/><line x1="370.00" x2="606.40" y1="522.67" y2="522.67" stroke="#d2d2d2" stroke-width="0.9"/><line x1="370.00" x2="606.40" y1="508.45" y2="508.45" stroke="#d2d2d2" stroke-width="0.9"/><line x1="370.00" x2="606.40" y1="494.23" y2="494.23" stroke="#d2d2d2" stroke-width="0.9"/><line x1="370.00" x2="606.40" y1="480.02" y2="480.02" stroke="#d2d2d2" stroke-width="0.9"/><line x1="370.00" x2="606.40" y1="465.80" y2="465.80" stroke="#d2d2d2" stroke-width="0.9"/><text x="364.00" y="553.60" text-anchor="end" fill="#000" style="white-space:pre;font-size:6.47px;font-weight:bold;" textLength="8.56" lengthAdjust="spacingAndGlyphs">$ 0</text><text x="364.00" y="539.38" text-anchor="end" fill="#000" style="white-space:pre;font-size:6.47px;font-weight:bold;" textLength="27.40" lengthAdjust="spacingAndGlyphs">$ 200,000</text><text x="364.00" y="525.17" text-anchor="end" fill="#000" style="white-space:pre;font-size:6.47px;font-weight:bold;" textLength="27.40" lengthAdjust="spacingAndGlyphs">$ 400,000</text><text x="364.00" y="510.95" text-anchor="end" fill="#000" style="white-space:pre;font-size:6.47px;font-weight:bold;" textLength="27.40" lengthAdjust="spacingAndGlyphs">$ 600,000</text><text x="364.00" y="496.73" text-anchor="end" fill="#000" style="white-space:pre;font-size:6.47px;font-weight:bold;" textLength="27.40" lengthAdjust="spacingAndGlyphs">$ 800,000</text><text x="364.00" y="482.52" text-anchor="end" fill="#000" style="white-space:pre;font-size:6.47px;font-weight:bold;" textLength="32.54" lengthAdjust="spacingAndGlyphs">$ 1,000,000</text><text x="364.00" y="468.30" text-anchor="end" fill="#000" style="white-space:pre;font-size:6.47px;font-weight:bold;" textLength="32.54" lengthAdjust="spacingAndGlyphs">$ 1,200,000</text><rect x="370.64" y="522.74" width="6.10" height="28.36" fill="#a6a6a6"/><rect x="370.64" y="520.11" width="6.10" height="2.63" fill="#7dd47d"/><rect x="378.03" y="528.35" width="6.10" height="22.75" fill="#a6a6a6"/><rect x="378.03" y="524.09" width="6.10" height="4.26" fill="#7dd47d"/><rect x="385.42" y="532.83" width="6.10" height="18.27" fill="#a6a6a6"/><rect x="385.42" y="528.57" width="6.10" height="4.26" fill="#7dd47d"/><rect x="392.81" y="530.41" width="6.10" height="20.69" fill="#a6a6a6"/><rect x="392.81" y="526.22" width="6.10" height="4.19" fill="#7dd47d"/><rect x="400.19" y="526.22" width="6.10" height="24.88" fill="#a6a6a6"/><rect x="400.19" y="521.67" width="6.10" height="4.55" fill="#7dd47d"/><rect x="407.58" y="524.87" width="6.10" height="26.23" fill="#a6a6a6"/><rect x="407.58" y="520.11" width="6.10" height="4.76" fill="#7dd47d"/><rect x="414.97" y="520.61" width="6.10" height="30.49" fill="#a6a6a6"/><rect x="414.97" y="514.78" width="6.10" height="5.83" fill="#7dd47d"/><rect x="422.36" y="521.17" width="6.10" height="29.93" fill="#a6a6a6"/><rect x="422.36" y="514.78" width="6.10" height="6.40" fill="#7dd47d"/><rect x="429.74" y="518.76" width="6.10" height="32.34" fill="#a6a6a6"/><rect x="429.74" y="512.72" width="6.10" height="6.04" fill="#7dd47d"/><rect x="437.13" y="517.48" width="6.10" height="33.62" fill="#a6a6a6"/><rect x="437.13" y="511.08" width="6.10" height="6.40" fill="#7dd47d"/><rect x="444.52" y="510.80" width="6.10" height="40.30" fill="#a6a6a6"/><rect x="444.52" y="504.19" width="6.10" height="6.61" fill="#7dd47d"/><rect x="451.91" y="504.97" width="6.10" height="46.13" fill="#a6a6a6"/><rect x="451.91" y="498.14" width="6.10" height="6.82" fill="#7dd47d"/><rect x="459.29" y="521.46" width="6.10" height="29.64" fill="#a6a6a6"/><rect x="459.29" y="513.99" width="6.10" height="7.46" fill="#7dd47d"/><rect x="466.68" y="522.24" width="6.10" height="28.86" fill="#a6a6a6"/><rect x="466.68" y="515.56" width="6.10" height="6.68" fill="#7dd47d"/><rect x="474.07" y="519.61" width="6.10" height="31.49" fill="#a6a6a6"/><rect x="474.07" y="512.93" width="6.10" height="6.68" fill="#7dd47d"/><rect x="481.46" y="512.72" width="6.10" height="38.38" fill="#a6a6a6"/><rect x="481.46" y="505.82" width="6.10" height="6.90" fill="#7dd47d"/><rect x="488.84" y="508.95" width="6.10" height="42.15" fill="#a6a6a6"/><rect x="488.84" y="501.06" width="6.10" height="7.89" fill="#7dd47d"/><rect x="496.23" y="509.52" width="6.10" height="41.58" fill="#a6a6a6"/><rect x="496.23" y="501.55" width="6.10" height="7.96" fill="#7dd47d"/><rect x="503.62" y="504.97" width="6.10" height="46.13" fill="#a6a6a6"/><rect x="503.62" y="497.08" width="6.10" height="7.89" fill="#7dd47d"/><rect x="511.01" y="498.14" width="6.10" height="52.96" fill="#a6a6a6"/><rect x="511.01" y="490.18" width="6.10" height="7.96" fill="#7dd47d"/><rect x="518.39" y="489.90" width="6.10" height="61.20" fill="#a6a6a6"/><rect x="518.39" y="482.22" width="6.10" height="7.68" fill="#7dd47d"/><rect x="525.78" y="522.24" width="6.10" height="28.86" fill="#a6a6a6"/><rect x="525.78" y="513.99" width="6.10" height="8.25" fill="#7dd47d"/><rect x="533.17" y="527.29" width="6.10" height="23.81" fill="#a6a6a6"/><rect x="533.17" y="519.04" width="6.10" height="8.25" fill="#7dd47d"/><rect x="540.56" y="522.74" width="6.10" height="28.36" fill="#a6a6a6"/><rect x="540.56" y="514.78" width="6.10" height="7.96" fill="#7dd47d"/><rect x="547.94" y="514.78" width="6.10" height="36.32" fill="#a6a6a6"/><rect x="547.94" y="506.89" width="6.10" height="7.89" fill="#7dd47d"/><rect x="555.33" y="514.78" width="6.10" height="36.32" fill="#a6a6a6"/><rect x="555.33" y="506.32" width="6.10" height="8.46" fill="#7dd47d"/><rect x="562.72" y="507.38" width="6.10" height="43.72" fill="#a6a6a6"/><rect x="562.72" y="498.92" width="6.10" height="8.46" fill="#7dd47d"/><rect x="570.11" y="501.55" width="6.10" height="49.55" fill="#a6a6a6"/><rect x="570.11" y="493.31" width="6.10" height="8.25" fill="#7dd47d"/><rect x="577.49" y="497.57" width="6.10" height="53.53" fill="#a6a6a6"/><rect x="577.49" y="488.83" width="6.10" height="8.74" fill="#7dd47d"/><rect x="584.88" y="502.34" width="6.10" height="48.76" fill="#a6a6a6"/><rect x="584.88" y="493.88" width="6.10" height="8.46" fill="#7dd47d"/><rect x="592.27" y="493.88" width="6.10" height="57.22" fill="#a6a6a6"/><rect x="592.27" y="485.42" width="6.10" height="8.46" fill="#7dd47d"/><rect x="599.66" y="490.11" width="6.10" height="60.99" fill="#a6a6a6"/><rect x="599.66" y="482.93" width="6.10" height="7.18" fill="#7dd47d"/><line x1="370.00" x2="606.40" y1="536.88" y2="536.88" stroke="rgba(0,0,0,0.10)" stroke-width="0.9"/><line x1="370.00" x2="606.40" y1="522.67" y2="522.67" stroke="rgba(0,0,0,0.10)" stroke-width="0.9"/><line x1="370.00" x2="606.40" y1="508.45" y2="508.45" stroke="rgba(0,0,0,0.10)" stroke-width="0.9"/><line x1="370.00" x2="606.40" y1="494.23" y2="494.23" stroke="rgba(0,0,0,0.10)" stroke-width="0.9"/><line x1="370.00" x2="606.40" y1="480.02" y2="480.02" stroke="rgba(0,0,0,0.10)" stroke-width="0.9"/><line x1="370.0" x2="606.4" y1="551.1" y2="551.1" stroke="#bfbfbf" stroke-width="0.8"/><line x1="370.0" x2="370.0" y1="465.8" y2="551.1" stroke="#c4c4c4" stroke-width="0.8"/><path d="M373.69,509.52 C374.93,510.18 378.62,512.36 381.08,513.50 C383.54,514.63 386.01,516.34 388.47,516.34 C390.93,516.34 393.39,514.84 395.86,513.50 C398.32,512.16 400.78,509.48 403.24,508.31 C405.71,507.13 408.17,507.67 410.63,506.46 C413.09,505.25 415.56,501.84 418.02,501.06 C420.48,500.28 422.94,501.97 425.41,501.77 C427.87,501.57 430.33,500.32 432.79,499.85 C435.26,499.38 437.72,500.06 440.18,498.92 C442.64,497.79 445.11,495.22 447.57,493.02 C450.03,490.83 452.49,484.04 454.96,485.77 C457.42,487.50 459.88,500.43 462.34,503.40 C464.81,506.38 467.27,504.21 469.73,503.62 C472.19,503.02 474.66,501.51 477.12,499.85 C479.58,498.19 482.04,494.39 484.51,493.66 C486.97,492.94 489.43,495.63 491.89,495.51 C494.36,495.39 496.82,493.76 499.28,492.95 C501.74,492.15 504.21,492.01 506.67,490.68 C509.13,489.35 511.59,487.24 514.06,484.99 C516.52,482.74 518.98,473.10 521.44,477.17 C523.91,481.25 526.37,502.78 528.83,509.45 C531.29,516.12 533.76,516.71 536.22,517.19 C538.68,517.68 541.14,514.48 543.61,512.36 C546.07,510.24 548.53,505.91 550.99,504.47 C553.46,503.02 555.92,505.12 558.38,503.69 C560.84,502.25 563.31,498.18 565.77,495.87 C568.23,493.56 570.69,491.76 573.16,489.83 C575.62,487.90 578.08,484.61 580.54,484.28 C583.01,483.95 585.47,488.72 587.93,487.84 C590.39,486.95 592.86,481.36 595.32,478.95 C597.78,476.55 601.47,474.33 602.71,473.41" fill="none" stroke="#e08f8f" stroke-width="3.1" stroke-linecap="round" stroke-opacity="0.92"/><text x="375.99" y="555.00" text-anchor="end" fill="#000" style="white-space:pre;font-size:6.47px;font-weight:bold;" textLength="13.70" lengthAdjust="spacingAndGlyphs" transform="rotate(-90 375.99 555.00)">2020</text><text x="390.77" y="555.00" text-anchor="end" fill="#000" style="white-space:pre;font-size:6.47px;font-weight:bold;" textLength="13.70" lengthAdjust="spacingAndGlyphs" transform="rotate(-90 390.77 555.00)">2022</text><text x="405.54" y="555.00" text-anchor="end" fill="#000" style="white-space:pre;font-size:6.47px;font-weight:bold;" textLength="13.70" lengthAdjust="spacingAndGlyphs" transform="rotate(-90 405.54 555.00)">2024</text><text x="420.32" y="555.00" text-anchor="end" fill="#000" style="white-space:pre;font-size:6.47px;font-weight:bold;" textLength="13.70" lengthAdjust="spacingAndGlyphs" transform="rotate(-90 420.32 555.00)">2026</text><text x="435.09" y="555.00" text-anchor="end" fill="#000" style="white-space:pre;font-size:6.47px;font-weight:bold;" textLength="13.70" lengthAdjust="spacingAndGlyphs" transform="rotate(-90 435.09 555.00)">2028</text><text x="449.87" y="555.00" text-anchor="end" fill="#000" style="white-space:pre;font-size:6.47px;font-weight:bold;" textLength="13.70" lengthAdjust="spacingAndGlyphs" transform="rotate(-90 449.87 555.00)">2030</text><text x="464.64" y="555.00" text-anchor="end" fill="#000" style="white-space:pre;font-size:6.47px;font-weight:bold;" textLength="13.70" lengthAdjust="spacingAndGlyphs" transform="rotate(-90 464.64 555.00)">2032</text><text x="479.42" y="555.00" text-anchor="end" fill="#000" style="white-space:pre;font-size:6.47px;font-weight:bold;" textLength="13.70" lengthAdjust="spacingAndGlyphs" transform="rotate(-90 479.42 555.00)">2034</text><text x="494.19" y="555.00" text-anchor="end" fill="#000" style="white-space:pre;font-size:6.47px;font-weight:bold;" textLength="13.70" lengthAdjust="spacingAndGlyphs" transform="rotate(-90 494.19 555.00)">2036</text><text x="508.97" y="555.00" text-anchor="end" fill="#000" style="white-space:pre;font-size:6.47px;font-weight:bold;" textLength="13.70" lengthAdjust="spacingAndGlyphs" transform="rotate(-90 508.97 555.00)">2038</text><text x="523.74" y="555.00" text-anchor="end" fill="#000" style="white-space:pre;font-size:6.47px;font-weight:bold;" textLength="13.70" lengthAdjust="spacingAndGlyphs" transform="rotate(-90 523.74 555.00)">2040</text><text x="538.52" y="555.00" text-anchor="end" fill="#000" style="white-space:pre;font-size:6.47px;font-weight:bold;" textLength="13.70" lengthAdjust="spacingAndGlyphs" transform="rotate(-90 538.52 555.00)">2042</text><text x="553.29" y="555.00" text-anchor="end" fill="#000" style="white-space:pre;font-size:6.47px;font-weight:bold;" textLength="13.70" lengthAdjust="spacingAndGlyphs" transform="rotate(-90 553.29 555.00)">2044</text><text x="568.07" y="555.00" text-anchor="end" fill="#000" style="white-space:pre;font-size:6.47px;font-weight:bold;" textLength="13.70" lengthAdjust="spacingAndGlyphs" transform="rotate(-90 568.07 555.00)">2046</text><text x="582.84" y="555.00" text-anchor="end" fill="#000" style="white-space:pre;font-size:6.47px;font-weight:bold;" textLength="13.70" lengthAdjust="spacingAndGlyphs" transform="rotate(-90 582.84 555.00)">2048</text><text x="597.62" y="555.00" text-anchor="end" fill="#000" style="white-space:pre;font-size:6.47px;font-weight:bold;" textLength="13.70" lengthAdjust="spacingAndGlyphs" transform="rotate(-90 597.62 555.00)">2050</text></g><g id="chart9"><rect x="618.6" y="446.4" width="281.4" height="253.60000000000002" rx="6.5" ry="6.5" fill="#fff" stroke="#c6c6c6" stroke-width="1"/><text x="698.90" y="460.00" text-anchor="start" fill="#000" style="white-space:pre;font-size:7.40px;font-weight:bold;" textLength="90.49" lengthAdjust="spacingAndGlyphs">Future Plan Annual Income</text><line x1="660.70" x2="900.00" y1="542.03" y2="542.03" stroke="#d2d2d2" stroke-width="0.9"/><line x1="660.70" x2="900.00" y1="526.77" y2="526.77" stroke="#d2d2d2" stroke-width="0.9"/><line x1="660.70" x2="900.00" y1="511.50" y2="511.50" stroke="#d2d2d2" stroke-width="0.9"/><line x1="660.70" x2="900.00" y1="496.23" y2="496.23" stroke="#d2d2d2" stroke-width="0.9"/><line x1="660.70" x2="900.00" y1="480.97" y2="480.97" stroke="#d2d2d2" stroke-width="0.9"/><line x1="660.70" x2="900.00" y1="465.70" y2="465.70" stroke="#d2d2d2" stroke-width="0.9"/><text x="655.00" y="559.80" text-anchor="end" fill="#000" style="white-space:pre;font-size:6.47px;font-weight:bold;" textLength="8.56" lengthAdjust="spacingAndGlyphs">$ 0</text><text x="655.00" y="544.53" text-anchor="end" fill="#000" style="white-space:pre;font-size:6.47px;font-weight:bold;" textLength="27.40" lengthAdjust="spacingAndGlyphs">$ 100,000</text><text x="655.00" y="529.27" text-anchor="end" fill="#000" style="white-space:pre;font-size:6.47px;font-weight:bold;" textLength="27.40" lengthAdjust="spacingAndGlyphs">$ 200,000</text><text x="655.00" y="514.00" text-anchor="end" fill="#000" style="white-space:pre;font-size:6.47px;font-weight:bold;" textLength="27.40" lengthAdjust="spacingAndGlyphs">$ 300,000</text><text x="655.00" y="498.73" text-anchor="end" fill="#000" style="white-space:pre;font-size:6.47px;font-weight:bold;" textLength="27.40" lengthAdjust="spacingAndGlyphs">$ 400,000</text><text x="655.00" y="483.47" text-anchor="end" fill="#000" style="white-space:pre;font-size:6.47px;font-weight:bold;" textLength="27.40" lengthAdjust="spacingAndGlyphs">$ 500,000</text><text x="655.00" y="468.20" text-anchor="end" fill="#000" style="white-space:pre;font-size:6.47px;font-weight:bold;" textLength="27.40" lengthAdjust="spacingAndGlyphs">$ 600,000</text><rect x="661.35" y="512.72" width="6.10" height="44.58" fill="#a6a6a6"/><rect x="661.35" y="511.19" width="6.10" height="1.53" fill="#c00000"/><rect x="661.35" y="487.99" width="6.10" height="23.21" fill="#1570f5"/><rect x="668.75" y="510.89" width="6.10" height="46.41" fill="#a6a6a6"/><rect x="668.75" y="509.36" width="6.10" height="1.53" fill="#c00000"/><rect x="668.75" y="508.90" width="6.10" height="0.46" fill="#7bbf4f"/><rect x="676.15" y="509.82" width="6.10" height="47.48" fill="#a6a6a6"/><rect x="676.15" y="508.29" width="6.10" height="1.53" fill="#c00000"/><rect x="676.15" y="507.84" width="6.10" height="0.46" fill="#7bbf4f"/><rect x="683.55" y="508.14" width="6.10" height="49.16" fill="#a6a6a6"/><rect x="683.55" y="506.61" width="6.10" height="1.53" fill="#c00000"/><rect x="683.55" y="506.16" width="6.10" height="0.46" fill="#7bbf4f"/><rect x="690.95" y="507.07" width="6.10" height="50.23" fill="#a6a6a6"/><rect x="690.95" y="505.55" width="6.10" height="1.53" fill="#c00000"/><rect x="690.95" y="505.09" width="6.10" height="0.46" fill="#7bbf4f"/><rect x="698.35" y="505.70" width="6.10" height="51.60" fill="#a6a6a6"/><rect x="698.35" y="504.17" width="6.10" height="1.53" fill="#c00000"/><rect x="698.35" y="503.71" width="6.10" height="0.46" fill="#7bbf4f"/><rect x="705.75" y="504.32" width="6.10" height="52.98" fill="#a6a6a6"/><rect x="705.75" y="502.80" width="6.10" height="1.53" fill="#c00000"/><rect x="705.75" y="502.34" width="6.10" height="0.46" fill="#7bbf4f"/><rect x="713.15" y="502.95" width="6.10" height="54.35" fill="#a6a6a6"/><rect x="713.15" y="501.42" width="6.10" height="1.53" fill="#c00000"/><rect x="713.15" y="500.97" width="6.10" height="0.46" fill="#7bbf4f"/><rect x="720.55" y="501.88" width="6.10" height="55.42" fill="#a6a6a6"/><rect x="720.55" y="500.36" width="6.10" height="1.53" fill="#c00000"/><rect x="720.55" y="499.90" width="6.10" height="0.46" fill="#7bbf4f"/><rect x="727.95" y="501.12" width="6.10" height="56.18" fill="#a6a6a6"/><rect x="727.95" y="499.59" width="6.10" height="1.53" fill="#c00000"/><rect x="727.95" y="499.13" width="6.10" height="0.46" fill="#7bbf4f"/><rect x="735.35" y="500.20" width="6.10" height="57.10" fill="#a6a6a6"/><rect x="735.35" y="498.68" width="6.10" height="1.53" fill="#c00000"/><rect x="735.35" y="498.22" width="6.10" height="0.46" fill="#7bbf4f"/><rect x="742.75" y="499.74" width="6.10" height="57.56" fill="#a6a6a6"/><rect x="742.75" y="498.22" width="6.10" height="1.53" fill="#c00000"/><rect x="742.75" y="497.76" width="6.10" height="0.46" fill="#7bbf4f"/><rect x="750.15" y="499.59" width="6.10" height="57.71" fill="#a6a6a6"/><rect x="750.15" y="498.07" width="6.10" height="1.53" fill="#c00000"/><rect x="750.15" y="497.61" width="6.10" height="0.46" fill="#7bbf4f"/><rect x="757.55" y="499.13" width="6.10" height="58.17" fill="#a6a6a6"/><rect x="757.55" y="497.61" width="6.10" height="1.53" fill="#c00000"/><rect x="757.55" y="497.15" width="6.10" height="0.46" fill="#7bbf4f"/><rect x="764.95" y="498.22" width="6.10" height="59.08" fill="#a6a6a6"/><rect x="764.95" y="496.69" width="6.10" height="1.53" fill="#c00000"/><rect x="764.95" y="496.23" width="6.10" height="0.46" fill="#7bbf4f"/><rect x="772.35" y="497.30" width="6.10" height="60.00" fill="#a6a6a6"/><rect x="772.35" y="495.78" width="6.10" height="1.53" fill="#c00000"/><rect x="772.35" y="495.32" width="6.10" height="0.46" fill="#7bbf4f"/><rect x="779.75" y="496.69" width="6.10" height="60.61" fill="#a6a6a6"/><rect x="779.75" y="495.16" width="6.10" height="1.53" fill="#c00000"/><rect x="779.75" y="494.71" width="6.10" height="0.46" fill="#7bbf4f"/><rect x="787.15" y="496.08" width="6.10" height="61.22" fill="#a6a6a6"/><rect x="787.15" y="494.55" width="6.10" height="1.53" fill="#c00000"/><rect x="787.15" y="494.10" width="6.10" height="0.46" fill="#7bbf4f"/><rect x="794.55" y="495.47" width="6.10" height="61.83" fill="#a6a6a6"/><rect x="794.55" y="493.94" width="6.10" height="1.53" fill="#c00000"/><rect x="794.55" y="493.49" width="6.10" height="0.46" fill="#7bbf4f"/><rect x="801.95" y="494.86" width="6.10" height="62.44" fill="#a6a6a6"/><rect x="801.95" y="493.33" width="6.10" height="1.53" fill="#c00000"/><rect x="801.95" y="492.87" width="6.10" height="0.46" fill="#7bbf4f"/><line x1="660.70" x2="900.00" y1="542.03" y2="542.03" stroke="rgba(0,0,0,0.10)" stroke-width="0.9"/><line x1="660.70" x2="900.00" y1="526.77" y2="526.77" stroke="rgba(0,0,0,0.10)" stroke-width="0.9"/><line x1="660.70" x2="900.00" y1="511.50" y2="511.50" stroke="rgba(0,0,0,0.10)" stroke-width="0.9"/><line x1="660.70" x2="900.00" y1="496.23" y2="496.23" stroke="rgba(0,0,0,0.10)" stroke-width="0.9"/><line x1="660.7" x2="900" y1="557.3" y2="557.3" stroke="#bfbfbf" stroke-width="0.8"/><line x1="660.7" x2="660.7" y1="465.7" y2="557.3" stroke="#c4c4c4" stroke-width="0.8"/><text x="666.70" y="560.50" text-anchor="end" fill="#000" style="white-space:pre;font-size:6.47px;font-weight:bold;" textLength="13.70" lengthAdjust="spacingAndGlyphs" transform="rotate(-90 666.70 560.50)">2020</text><text x="681.50" y="560.50" text-anchor="end" fill="#000" style="white-space:pre;font-size:6.47px;font-weight:bold;" textLength="13.70" lengthAdjust="spacingAndGlyphs" transform="rotate(-90 681.50 560.50)">2022</text><text x="696.30" y="560.50" text-anchor="end" fill="#000" style="white-space:pre;font-size:6.47px;font-weight:bold;" textLength="13.70" lengthAdjust="spacingAndGlyphs" transform="rotate(-90 696.30 560.50)">2024</text><text x="711.10" y="560.50" text-anchor="end" fill="#000" style="white-space:pre;font-size:6.47px;font-weight:bold;" textLength="13.70" lengthAdjust="spacingAndGlyphs" transform="rotate(-90 711.10 560.50)">2026</text><text x="725.90" y="560.50" text-anchor="end" fill="#000" style="white-space:pre;font-size:6.47px;font-weight:bold;" textLength="13.70" lengthAdjust="spacingAndGlyphs" transform="rotate(-90 725.90 560.50)">2028</text><text x="740.70" y="560.50" text-anchor="end" fill="#000" style="white-space:pre;font-size:6.47px;font-weight:bold;" textLength="13.70" lengthAdjust="spacingAndGlyphs" transform="rotate(-90 740.70 560.50)">2030</text><text x="755.50" y="560.50" text-anchor="end" fill="#000" style="white-space:pre;font-size:6.47px;font-weight:bold;" textLength="13.70" lengthAdjust="spacingAndGlyphs" transform="rotate(-90 755.50 560.50)">2032</text><text x="770.30" y="560.50" text-anchor="end" fill="#000" style="white-space:pre;font-size:6.47px;font-weight:bold;" textLength="13.70" lengthAdjust="spacingAndGlyphs" transform="rotate(-90 770.30 560.50)">2034</text><text x="785.10" y="560.50" text-anchor="end" fill="#000" style="white-space:pre;font-size:6.47px;font-weight:bold;" textLength="13.70" lengthAdjust="spacingAndGlyphs" transform="rotate(-90 785.10 560.50)">2036</text><text x="799.90" y="560.50" text-anchor="end" fill="#000" style="white-space:pre;font-size:6.47px;font-weight:bold;" textLength="13.70" lengthAdjust="spacingAndGlyphs" transform="rotate(-90 799.90 560.50)">2038</text></g></g></svg></div>
<div id="titlebar" class="abs"></div>
<div id="ribbon" class="abs"></div>
<div id="colhdr" class="abs"></div>
<div id="rowhdr" class="abs"></div>
<div id="chrome" class="abs" style="left:0;top:0;width:800px;height:596px;"><svg class="abs" style="left:0;top:0" width="800" height="596" viewBox="0 0 800 596"><defs><clipPath id="rowclip"><rect x="0" y="49" width="14" height="521"/></clipPath></defs><text x="13.00" y="12.80" text-anchor="start" fill="#d7e7dd" style="white-space:pre;font-size:7.14px;" textLength="29.50" lengthAdjust="spacingAndGlyphs">AutoSave</text><rect x="47" y="5" width="22" height="10.4" rx="5.2" fill="none" stroke="#fff" stroke-width="1"/><circle cx="52.3" cy="10.2" r="2.3" fill="#fff"/><text x="58.50" y="12.40" text-anchor="start" fill="#fff" style="white-space:pre;font-size:5.82px;font-weight:bold;" textLength="8.00" lengthAdjust="spacingAndGlyphs">Off</text><g fill="none" stroke="#e4efe8" stroke-width="0.9"><path d="M78.5,6 H86 L87.5,7.5 V15 H78.5 Z"/><rect x="80.5" y="6" width="4.6" height="3"/><rect x="80.3" y="11" width="5.4" height="4"/></g><g fill="none" stroke="#6fa88a" stroke-width="1"><path d="M97.5,8 H102 A3,3 0 0 1 102,14 H100"/><path d="M99.5,6 L97.5,8 L99.5,10"/><path d="M128,8 H123.5 A3,3 0 0 0 123.5,14 H125.5"/><path d="M126,6 L128,8 L126,10"/></g><path d="M109.5,9.5 l1.5,1.6 l1.5,-1.6" fill="none" stroke="#6fa88a" stroke-width="0.8"/><path d="M133,9.5 l1.5,1.6 l1.5,-1.6" fill="none" stroke="#6fa88a" stroke-width="0.8"/><path d="M143.5,5.8 V14.2 L145.6,12.3 L147,15.2 L148.2,14.6 L146.9,11.8 H149.6 Z" fill="none" stroke="#e4efe8" stroke-width="0.9" stroke-linejoin="round"/><path d="M162.6,8.2 H166.4 M162.8,10 L164.5,12 L166.2,10 Z" fill="none" stroke="#e4efe8" stroke-width="0.8"/><text x="205.50" y="12.80" text-anchor="start" fill="#e8f1ec" style="white-space:pre;font-size:7.26px;" textLength="51.50" lengthAdjust="spacingAndGlyphs">RFA V5.2 Beta A</text><path d="M260.5,9 h3.4 l-1.7,2.2 z" fill="#e8f1ec"/><rect x="298" y="3.5" width="214.5" height="13" fill="#a4d1b7"/><circle cx="314.6" cy="8.9" r="2.6" fill="none" stroke="#1e6b41" stroke-width="0.9"/><line x1="312.8" y1="10.8" x2="310.3" y2="13.6" stroke="#1e6b41" stroke-width="0.9"/><text x="326.50" y="12.80" text-anchor="start" fill="#2a6f4a" style="white-space:pre;font-size:7.13px;" textLength="21.50" lengthAdjust="spacingAndGlyphs">Search</text><text x="640.00" y="12.80" text-anchor="start" fill="#e8f1ec" style="white-space:pre;font-size:7.14px;" textLength="34.00" lengthAdjust="spacingAndGlyphs">Steve Bisel</text><circle cx="685.7" cy="10" r="7" fill="#8b7f86"/><text x="685.70" y="12.40" text-anchor="middle" fill="#fff" style="white-space:pre;font-size:6.40px;" textLength="8.11" lengthAdjust="spacingAndGlyphs">SB</text><g fill="none" stroke="#e4efe8" stroke-width="0.9"><rect x="708.5" y="6.8" width="7" height="5.6"/><line x1="708.5" y1="8.6" x2="715.5" y2="8.6"/><path d="M711.2,11 l0.8,-0.9 l0.8,0.9"/><line x1="733.5" y1="10" x2="740" y2="10"/><rect x="758.5" y="7" width="6" height="6"/><path d="M783.5,7 l5.6,5.8 M789.1,7 l-5.6,5.8"/></g><text x="10.50" y="32.30" text-anchor="start" fill="#444" style="white-space:pre;font-size:8.15px;" textLength="12.50" lengthAdjust="spacingAndGlyphs">File</text><text x="39.70" y="32.30" text-anchor="start" fill="#444" style="white-space:pre;font-size:8.27px;" textLength="21.00" lengthAdjust="spacingAndGlyphs">Home</text><text x="74.50" y="32.30" text-anchor="start" fill="#444" style="white-space:pre;font-size:8.19px;" textLength="19.50" lengthAdjust="spacingAndGlyphs">Insert</text><text x="108.30" y="32.30" text-anchor="start" fill="#444" style="white-space:pre;font-size:8.10px;" textLength="18.00" lengthAdjust="spacingAndGlyphs">Draw</text><text x="140.50" y="32.30" text-anchor="start" fill="#444" style="white-space:pre;font-size:7.85px;" textLength="42.00" lengthAdjust="spacingAndGlyphs">Page Layout</text><text x="196.00" y="32.30" text-anchor="start" fill="#444" style="white-space:pre;font-size:7.69px;" textLength="30.50" lengthAdjust="spacingAndGlyphs">Formulas</text><text x="243.00" y="32.30" text-anchor="start" fill="#444" style="white-space:pre;font-size:7.95px;" textLength="16.00" lengthAdjust="spacingAndGlyphs">Data</text><text x="273.00" y="32.30" text-anchor="start" fill="#444" style="white-space:pre;font-size:7.69px;" textLength="24.00" lengthAdjust="spacingAndGlyphs">Review</text><text x="311.00" y="32.30" text-anchor="start" fill="#444" style="white-space:pre;font-size:7.82px;" textLength="16.00" lengthAdjust="spacingAndGlyphs">View</text><text x="342.00" y="32.30" text-anchor="start" fill="#444" style="white-space:pre;font-size:8.29px;" textLength="36.00" lengthAdjust="spacingAndGlyphs">Developer</text><text x="391.50" y="32.30" text-anchor="start" fill="#444" style="white-space:pre;font-size:8.52px;" textLength="27.50" lengthAdjust="spacingAndGlyphs">Add-ins</text><text x="432.50" y="32.30" text-anchor="start" fill="#444" style="white-space:pre;font-size:8.17px;" textLength="16.00" lengthAdjust="spacingAndGlyphs">Help</text><text x="463.00" y="32.30" text-anchor="start" fill="#444" style="white-space:pre;font-size:7.82px;" textLength="26.50" lengthAdjust="spacingAndGlyphs">DoneEx</text><rect x="692" y="22.5" width="39.5" height="15" rx="1" fill="#fff" stroke="#e1e1e1" stroke-width="0.6"/><rect x="735" y="22.5" width="56.5" height="15" rx="1" fill="#fff" stroke="#e1e1e1" stroke-width="0.6"/><g fill="none" stroke="#217346" stroke-width="0.8"><path d="M698.5,28.4 H696.4 V33 H702 V31.2"/><path d="M698.2,31 C698.4,28.6 700,27.8 702.4,27.8 M701,26.3 L702.6,27.8 L701,29.3"/></g><text x="705.80" y="33.00" text-anchor="start" fill="#217346" style="white-space:pre;font-size:7.74px;font-weight:bold;" textLength="20.50" lengthAdjust="spacingAndGlyphs">Share</text><path d="M740.3,26.5 H746.8 V31 H743.2 L741.8,32.6 V31 H740.3 Z" fill="none" stroke="#217346" stroke-width="0.8"/><text x="749.20" y="33.00" text-anchor="start" fill="#217346" style="white-space:pre;font-size:7.62px;font-weight:bold;" textLength="37.50" lengthAdjust="spacingAndGlyphs">Comments</text><line x1="13.50" x2="13.50" y1="40" y2="49" stroke="#c6c6c6" stroke-width="0.8"/><text x="30.30" y="47.00" text-anchor="middle" fill="#303030" style="white-space:pre;font-size:7.40px;" textLength="4.69" lengthAdjust="spacingAndGlyphs">A</text><line x1="48.10" x2="48.10" y1="40" y2="49" stroke="#c6c6c6" stroke-width="0.8"/><text x="64.90" y="47.00" text-anchor="middle" fill="#303030" style="white-space:pre;font-size:7.40px;" textLength="4.69" lengthAdjust="spacingAndGlyphs">B</text><line x1="82.70" x2="82.70" y1="40" y2="49" stroke="#c6c6c6" stroke-width="0.8"/><text x="99.50" y="47.00" text-anchor="middle" fill="#303030" style="white-space:pre;font-size:7.40px;" textLength="5.08" lengthAdjust="spacingAndGlyphs">C</text><line x1="117.30" x2="117.30" y1="40" y2="49" stroke="#c6c6c6" stroke-width="0.8"/><text x="134.10" y="47.00" text-anchor="middle" fill="#303030" style="white-space:pre;font-size:7.40px;" textLength="5.08" lengthAdjust="spacingAndGlyphs">D</text><line x1="151.90" x2="151.90" y1="40" y2="49" stroke="#c6c6c6" stroke-width="0.8"/><text x="168.70" y="47.00" text-anchor="middle" fill="#303030" style="white-space:pre;font-size:7.40px;" textLength="4.69" lengthAdjust="spacingAndGlyphs">E</text><line x1="186.50" x2="186.50" y1="40" y2="49" stroke="#c6c6c6" stroke-width="0.8"/><text x="203.30" y="47.00" text-anchor="middle" fill="#303030" style="white-space:pre;font-size:7.40px;" textLength="4.29" lengthAdjust="spacingAndGlyphs">F</text><line x1="221.10" x2="221.10" y1="40" y2="49" stroke="#c6c6c6" stroke-width="0.8"/><text x="237.90" y="47.00" text-anchor="middle" fill="#303030" style="white-space:pre;font-size:7.40px;" textLength="5.47" lengthAdjust="spacingAndGlyphs">G</text><line x1="255.70" x2="255.70" y1="40" y2="49" stroke="#c6c6c6" stroke-width="0.8"/><text x="272.50" y="47.00" text-anchor="middle" fill="#303030" style="white-space:pre;font-size:7.40px;" textLength="5.08" lengthAdjust="spacingAndGlyphs">H</text><line x1="290.30" x2="290.30" y1="40" y2="49" stroke="#c6c6c6" stroke-width="0.8"/><text x="307.10" y="47.00" text-anchor="middle" fill="#303030" style="white-space:pre;font-size:7.40px;" textLength="1.95" lengthAdjust="spacingAndGlyphs">I</text><line x1="324.90" x2="324.90" y1="40" y2="49" stroke="#c6c6c6" stroke-width="0.8"/><text x="341.70" y="47.00" text-anchor="middle" fill="#303030" style="white-space:pre;font-size:7.40px;" textLength="3.52" lengthAdjust="spacingAndGlyphs">J</text><line x1="359.50" x2="359.50" y1="40" y2="49" stroke="#c6c6c6" stroke-width="0.8"/><text x="376.30" y="47.00" text-anchor="middle" fill="#303030" style="white-space:pre;font-size:7.40px;" textLength="4.69" lengthAdjust="spacingAndGlyphs">K</text><line x1="394.10" x2="394.10" y1="40" y2="49" stroke="#c6c6c6" stroke-width="0.8"/><text x="410.90" y="47.00" text-anchor="middle" fill="#303030" style="white-space:pre;font-size:7.40px;" textLength="3.91" lengthAdjust="spacingAndGlyphs">L</text><line x1="428.70" x2="428.70" y1="40" y2="49" stroke="#c6c6c6" stroke-width="0.8"/><text x="445.50" y="47.00" text-anchor="middle" fill="#303030" style="white-space:pre;font-size:7.40px;" textLength="5.86" lengthAdjust="spacingAndGlyphs">M</text><line x1="463.30" x2="463.30" y1="40" y2="49" stroke="#c6c6c6" stroke-width="0.8"/><text x="480.10" y="47.00" text-anchor="middle" fill="#303030" style="white-space:pre;font-size:7.40px;" textLength="5.08" lengthAdjust="spacingAndGlyphs">N</text><line x1="497.90" x2="497.90" y1="40" y2="49" stroke="#c6c6c6" stroke-width="0.8"/><text x="514.70" y="47.00" text-anchor="middle" fill="#303030" style="white-space:pre;font-size:7.40px;" textLength="5.47" lengthAdjust="spacingAndGlyphs">O</text><line x1="532.50" x2="532.50" y1="40" y2="49" stroke="#c6c6c6" stroke-width="0.8"/><text x="549.30" y="47.00" text-anchor="middle" fill="#303030" style="white-space:pre;font-size:7.40px;" textLength="4.69" lengthAdjust="spacingAndGlyphs">P</text><line x1="567.10" x2="567.10" y1="40" y2="49" stroke="#c6c6c6" stroke-width="0.8"/><text x="583.90" y="47.00" text-anchor="middle" fill="#303030" style="white-space:pre;font-size:7.40px;" textLength="5.47" lengthAdjust="spacingAndGlyphs">Q</text><line x1="601.70" x2="601.70" y1="40" y2="49" stroke="#c6c6c6" stroke-width="0.8"/><text x="618.50" y="47.00" text-anchor="middle" fill="#303030" style="white-space:pre;font-size:7.40px;" textLength="5.08" lengthAdjust="spacingAndGlyphs">R</text><line x1="636.30" x2="636.30" y1="40" y2="49" stroke="#c6c6c6" stroke-width="0.8"/><text x="653.10" y="47.00" text-anchor="middle" fill="#303030" style="white-space:pre;font-size:7.40px;" textLength="4.69" lengthAdjust="spacingAndGlyphs">S</text><line x1="670.90" x2="670.90" y1="40" y2="49" stroke="#c6c6c6" stroke-width="0.8"/><text x="687.70" y="47.00" text-anchor="middle" fill="#303030" style="white-space:pre;font-size:7.40px;" textLength="4.29" lengthAdjust="spacingAndGlyphs">T</text><line x1="705.50" x2="705.50" y1="40" y2="49" stroke="#c6c6c6" stroke-width="0.8"/><text x="722.30" y="47.00" text-anchor="middle" fill="#303030" style="white-space:pre;font-size:7.40px;" textLength="5.08" lengthAdjust="spacingAndGlyphs">U</text><line x1="740.10" x2="740.10" y1="40" y2="49" stroke="#c6c6c6" stroke-width="0.8"/><text x="756.90" y="47.00" text-anchor="middle" fill="#303030" style="white-space:pre;font-size:7.40px;" textLength="4.69" lengthAdjust="spacingAndGlyphs">V</text><line x1="774.70" x2="774.70" y1="40" y2="49" stroke="#c6c6c6" stroke-width="0.8"/><path d="M11.5,41.5 V47.5 H5.5 Z" fill="#b8b8b8"/><text x="7.00" y="55.85" text-anchor="middle" fill="#303030" style="white-space:pre;font-size:7.50px;" textLength="3.75" lengthAdjust="spacingAndGlyphs">1</text><line x1="0" x2="13.5" y1="58.00" y2="58.00" stroke="#cfcfcf" stroke-width="0.7"/><text x="7.00" y="74.05" text-anchor="middle" fill="#303030" style="white-space:pre;font-size:7.50px;" textLength="3.75" lengthAdjust="spacingAndGlyphs">2</text><line x1="0" x2="13.5" y1="82.00" y2="82.00" stroke="#cfcfcf" stroke-width="0.7"/><text x="7.00" y="89.35" text-anchor="middle" fill="#303030" style="white-space:pre;font-size:7.50px;" textLength="3.75" lengthAdjust="spacingAndGlyphs">3</text><line x1="0" x2="13.5" y1="92.00" y2="92.00" stroke="#cfcfcf" stroke-width="0.7"/><text x="7.00" y="99.75" text-anchor="middle" fill="#303030" style="white-space:pre;font-size:7.50px;" textLength="3.75" lengthAdjust="spacingAndGlyphs">4</text><line x1="0" x2="13.5" y1="102.00" y2="102.00" stroke="#cfcfcf" stroke-width="0.7"/><text x="7.00" y="109.85" text-anchor="middle" fill="#303030" style="white-space:pre;font-size:7.50px;" textLength="3.75" lengthAdjust="spacingAndGlyphs">5</text><line x1="0" x2="13.5" y1="112.50" y2="112.50" stroke="#cfcfcf" stroke-width="0.7"/><text x="7.00" y="120.35" text-anchor="middle" fill="#303030" style="white-space:pre;font-size:7.50px;" textLength="3.75" lengthAdjust="spacingAndGlyphs">6</text><line x1="0" x2="13.5" y1="122.70" y2="122.70" stroke="#cfcfcf" stroke-width="0.7"/><text x="7.00" y="130.85" text-anchor="middle" fill="#303030" style="white-space:pre;font-size:7.50px;" textLength="3.75" lengthAdjust="spacingAndGlyphs">7</text><line x1="0" x2="13.5" y1="132.53" y2="132.53" stroke="#cfcfcf" stroke-width="0.7"/><text x="7.00" y="140.68" text-anchor="middle" fill="#303030" style="white-space:pre;font-size:7.50px;" textLength="3.75" lengthAdjust="spacingAndGlyphs">8</text><line x1="0" x2="13.5" y1="142.36" y2="142.36" stroke="#cfcfcf" stroke-width="0.7"/><text x="7.00" y="150.51" text-anchor="middle" fill="#303030" style="white-space:pre;font-size:7.50px;" textLength="3.75" lengthAdjust="spacingAndGlyphs">9</text><line x1="0" x2="13.5" y1="152.19" y2="152.19" stroke="#cfcfcf" stroke-width="0.7"/><text x="7.00" y="160.34" text-anchor="middle" fill="#303030" style="white-space:pre;font-size:7.50px;" textLength="7.51" lengthAdjust="spacingAndGlyphs">10</text><line x1="0" x2="13.5" y1="162.02" y2="162.02" stroke="#cfcfcf" stroke-width="0.7"/><text x="7.00" y="170.17" text-anchor="middle" fill="#303030" style="white-space:pre;font-size:7.50px;" textLength="7.01" lengthAdjust="spacingAndGlyphs">11</text><line x1="0" x2="13.5" y1="171.85" y2="171.85" stroke="#cfcfcf" stroke-width="0.7"/><text x="7.00" y="180.00" text-anchor="middle" fill="#303030" style="white-space:pre;font-size:7.50px;" textLength="7.51" lengthAdjust="spacingAndGlyphs">12</text><line x1="0" x2="13.5" y1="181.68" y2="181.68" stroke="#cfcfcf" stroke-width="0.7"/><text x="7.00" y="189.83" text-anchor="middle" fill="#303030" style="white-space:pre;font-size:7.50px;" textLength="7.51" lengthAdjust="spacingAndGlyphs">13</text><line x1="0" x2="13.5" y1="191.51" y2="191.51" stroke="#cfcfcf" stroke-width="0.7"/><text x="7.00" y="199.66" text-anchor="middle" fill="#303030" style="white-space:pre;font-size:7.50px;" textLength="7.51" lengthAdjust="spacingAndGlyphs">14</text><line x1="0" x2="13.5" y1="201.34" y2="201.34" stroke="#cfcfcf" stroke-width="0.7"/><text x="7.00" y="209.49" text-anchor="middle" fill="#303030" style="white-space:pre;font-size:7.50px;" textLength="7.51" lengthAdjust="spacingAndGlyphs">15</text><line x1="0" x2="13.5" y1="211.17" y2="211.17" stroke="#cfcfcf" stroke-width="0.7"/><text x="7.00" y="219.32" text-anchor="middle" fill="#303030" style="white-space:pre;font-size:7.50px;" textLength="7.51" lengthAdjust="spacingAndGlyphs">16</text><line x1="0" x2="13.5" y1="221.00" y2="221.00" stroke="#cfcfcf" stroke-width="0.7"/><text x="7.00" y="229.15" text-anchor="middle" fill="#303030" style="white-space:pre;font-size:7.50px;" textLength="7.51" lengthAdjust="spacingAndGlyphs">17</text><line x1="0" x2="13.5" y1="230.83" y2="230.83" stroke="#cfcfcf" stroke-width="0.7"/><text x="7.00" y="238.98" text-anchor="middle" fill="#303030" style="white-space:pre;font-size:7.50px;" textLength="7.51" lengthAdjust="spacingAndGlyphs">18</text><line x1="0" x2="13.5" y1="240.66" y2="240.66" stroke="#cfcfcf" stroke-width="0.7"/><text x="7.00" y="248.81" text-anchor="middle" fill="#303030" style="white-space:pre;font-size:7.50px;" textLength="7.51" lengthAdjust="spacingAndGlyphs">19</text><line x1="0" x2="13.5" y1="250.49" y2="250.49" stroke="#cfcfcf" stroke-width="0.7"/><text x="7.00" y="258.64" text-anchor="middle" fill="#303030" style="white-space:pre;font-size:7.50px;" textLength="7.51" lengthAdjust="spacingAndGlyphs">20</text><line x1="0" x2="13.5" y1="260.32" y2="260.32" stroke="#cfcfcf" stroke-width="0.7"/><text x="7.00" y="268.47" text-anchor="middle" fill="#303030" style="white-space:pre;font-size:7.50px;" textLength="7.51" lengthAdjust="spacingAndGlyphs">21</text><line x1="0" x2="13.5" y1="270.15" y2="270.15" stroke="#cfcfcf" stroke-width="0.7"/><text x="7.00" y="278.30" text-anchor="middle" fill="#303030" style="white-space:pre;font-size:7.50px;" textLength="7.51" lengthAdjust="spacingAndGlyphs">22</text><line x1="0" x2="13.5" y1="279.98" y2="279.98" stroke="#cfcfcf" stroke-width="0.7"/><text x="7.00" y="288.13" text-anchor="middle" fill="#303030" style="white-space:pre;font-size:7.50px;" textLength="7.51" lengthAdjust="spacingAndGlyphs">23</text><line x1="0" x2="13.5" y1="289.81" y2="289.81" stroke="#cfcfcf" stroke-width="0.7"/><text x="7.00" y="297.96" text-anchor="middle" fill="#303030" style="white-space:pre;font-size:7.50px;" textLength="7.51" lengthAdjust="spacingAndGlyphs">24</text><line x1="0" x2="13.5" y1="299.64" y2="299.64" stroke="#cfcfcf" stroke-width="0.7"/><text x="7.00" y="307.79" text-anchor="middle" fill="#303030" style="white-space:pre;font-size:7.50px;" textLength="7.51" lengthAdjust="spacingAndGlyphs">25</text><line x1="0" x2="13.5" y1="309.47" y2="309.47" stroke="#cfcfcf" stroke-width="0.7"/><text x="7.00" y="317.62" text-anchor="middle" fill="#303030" style="white-space:pre;font-size:7.50px;" textLength="7.51" lengthAdjust="spacingAndGlyphs">26</text><line x1="0" x2="13.5" y1="319.30" y2="319.30" stroke="#cfcfcf" stroke-width="0.7"/><text x="7.00" y="327.45" text-anchor="middle" fill="#303030" style="white-space:pre;font-size:7.50px;" textLength="7.51" lengthAdjust="spacingAndGlyphs">27</text><line x1="0" x2="13.5" y1="329.13" y2="329.13" stroke="#cfcfcf" stroke-width="0.7"/><text x="7.00" y="337.28" text-anchor="middle" fill="#303030" style="white-space:pre;font-size:7.50px;" textLength="7.51" lengthAdjust="spacingAndGlyphs">28</text><line x1="0" x2="13.5" y1="338.96" y2="338.96" stroke="#cfcfcf" stroke-width="0.7"/><text x="7.00" y="347.11" text-anchor="middle" fill="#303030" style="white-space:pre;font-size:7.50px;" textLength="7.51" lengthAdjust="spacingAndGlyphs">29</text><line x1="0" x2="13.5" y1="348.79" y2="348.79" stroke="#cfcfcf" stroke-width="0.7"/><text x="7.00" y="356.94" text-anchor="middle" fill="#303030" style="white-space:pre;font-size:7.50px;" textLength="7.51" lengthAdjust="spacingAndGlyphs">30</text><line x1="0" x2="13.5" y1="358.62" y2="358.62" stroke="#cfcfcf" stroke-width="0.7"/><text x="7.00" y="366.77" text-anchor="middle" fill="#303030" style="white-space:pre;font-size:7.50px;" textLength="7.51" lengthAdjust="spacingAndGlyphs">31</text><line x1="0" x2="13.5" y1="368.45" y2="368.45" stroke="#cfcfcf" stroke-width="0.7"/><text x="7.00" y="376.60" text-anchor="middle" fill="#303030" style="white-space:pre;font-size:7.50px;" textLength="7.51" lengthAdjust="spacingAndGlyphs">32</text><line x1="0" x2="13.5" y1="378.28" y2="378.28" stroke="#cfcfcf" stroke-width="0.7"/><text x="7.00" y="386.43" text-anchor="middle" fill="#303030" style="white-space:pre;font-size:7.50px;" textLength="7.51" lengthAdjust="spacingAndGlyphs">33</text><line x1="0" x2="13.5" y1="388.11" y2="388.11" stroke="#cfcfcf" stroke-width="0.7"/><text x="7.00" y="396.26" text-anchor="middle" fill="#303030" style="white-space:pre;font-size:7.50px;" textLength="7.51" lengthAdjust="spacingAndGlyphs">34</text><line x1="0" x2="13.5" y1="397.94" y2="397.94" stroke="#cfcfcf" stroke-width="0.7"/><text x="7.00" y="406.09" text-anchor="middle" fill="#303030" style="white-space:pre;font-size:7.50px;" textLength="7.51" lengthAdjust="spacingAndGlyphs">35</text><line x1="0" x2="13.5" y1="407.77" y2="407.77" stroke="#cfcfcf" stroke-width="0.7"/><text x="7.00" y="415.92" text-anchor="middle" fill="#303030" style="white-space:pre;font-size:7.50px;" textLength="7.51" lengthAdjust="spacingAndGlyphs">36</text><line x1="0" x2="13.5" y1="417.60" y2="417.60" stroke="#cfcfcf" stroke-width="0.7"/><text x="7.00" y="425.75" text-anchor="middle" fill="#303030" style="white-space:pre;font-size:7.50px;" textLength="7.51" lengthAdjust="spacingAndGlyphs">37</text><line x1="0" x2="13.5" y1="427.43" y2="427.43" stroke="#cfcfcf" stroke-width="0.7"/><text x="7.00" y="435.58" text-anchor="middle" fill="#303030" style="white-space:pre;font-size:7.50px;" textLength="7.51" lengthAdjust="spacingAndGlyphs">38</text><line x1="0" x2="13.5" y1="437.26" y2="437.26" stroke="#cfcfcf" stroke-width="0.7"/><text x="7.00" y="445.41" text-anchor="middle" fill="#303030" style="white-space:pre;font-size:7.50px;" textLength="7.51" lengthAdjust="spacingAndGlyphs">39</text><line x1="0" x2="13.5" y1="447.09" y2="447.09" stroke="#cfcfcf" stroke-width="0.7"/><text x="7.00" y="455.24" text-anchor="middle" fill="#303030" style="white-space:pre;font-size:7.50px;" textLength="7.51" lengthAdjust="spacingAndGlyphs">40</text><line x1="0" x2="13.5" y1="456.92" y2="456.92" stroke="#cfcfcf" stroke-width="0.7"/><text x="7.00" y="465.07" text-anchor="middle" fill="#303030" style="white-space:pre;font-size:7.50px;" textLength="7.51" lengthAdjust="spacingAndGlyphs">41</text><line x1="0" x2="13.5" y1="466.75" y2="466.75" stroke="#cfcfcf" stroke-width="0.7"/><text x="7.00" y="474.90" text-anchor="middle" fill="#303030" style="white-space:pre;font-size:7.50px;" textLength="7.51" lengthAdjust="spacingAndGlyphs">42</text><line x1="0" x2="13.5" y1="476.58" y2="476.58" stroke="#cfcfcf" stroke-width="0.7"/><text x="7.00" y="484.73" text-anchor="middle" fill="#303030" style="white-space:pre;font-size:7.50px;" textLength="7.51" lengthAdjust="spacingAndGlyphs">43</text><line x1="0" x2="13.5" y1="486.41" y2="486.41" stroke="#cfcfcf" stroke-width="0.7"/><text x="7.00" y="494.56" text-anchor="middle" fill="#303030" style="white-space:pre;font-size:7.50px;" textLength="7.51" lengthAdjust="spacingAndGlyphs">44</text><line x1="0" x2="13.5" y1="496.24" y2="496.24" stroke="#cfcfcf" stroke-width="0.7"/><text x="7.00" y="504.39" text-anchor="middle" fill="#303030" style="white-space:pre;font-size:7.50px;" textLength="7.51" lengthAdjust="spacingAndGlyphs">45</text><line x1="0" x2="13.5" y1="506.07" y2="506.07" stroke="#cfcfcf" stroke-width="0.7"/><text x="7.00" y="514.22" text-anchor="middle" fill="#303030" style="white-space:pre;font-size:7.50px;" textLength="7.51" lengthAdjust="spacingAndGlyphs">46</text><line x1="0" x2="13.5" y1="515.90" y2="515.90" stroke="#cfcfcf" stroke-width="0.7"/><text x="7.00" y="524.05" text-anchor="middle" fill="#303030" style="white-space:pre;font-size:7.50px;" textLength="7.51" lengthAdjust="spacingAndGlyphs">47</text><line x1="0" x2="13.5" y1="525.73" y2="525.73" stroke="#cfcfcf" stroke-width="0.7"/><text x="7.00" y="533.88" text-anchor="middle" fill="#303030" style="white-space:pre;font-size:7.50px;" textLength="7.51" lengthAdjust="spacingAndGlyphs">48</text><line x1="0" x2="13.5" y1="535.56" y2="535.56" stroke="#cfcfcf" stroke-width="0.7"/><text x="7.00" y="543.71" text-anchor="middle" fill="#303030" style="white-space:pre;font-size:7.50px;" textLength="7.51" lengthAdjust="spacingAndGlyphs">49</text><line x1="0" x2="13.5" y1="545.39" y2="545.39" stroke="#cfcfcf" stroke-width="0.7"/><text x="7.00" y="553.54" text-anchor="middle" fill="#303030" style="white-space:pre;font-size:7.50px;" textLength="7.51" lengthAdjust="spacingAndGlyphs">50</text><line x1="0" x2="13.5" y1="555.22" y2="555.22" stroke="#cfcfcf" stroke-width="0.7"/><text x="7.00" y="563.37" text-anchor="middle" fill="#303030" style="white-space:pre;font-size:7.50px;" textLength="7.51" lengthAdjust="spacingAndGlyphs">51</text><line x1="0" x2="13.5" y1="565.05" y2="565.05" stroke="#cfcfcf" stroke-width="0.7"/><text x="7.00" y="573.20" text-anchor="middle" fill="#303030" style="white-space:pre;font-size:7.50px;" textLength="7.51" lengthAdjust="spacingAndGlyphs">52</text></svg></div>
<div id="bottom" class="abs" style="left:0;top:0;width:800px;height:596px;"><svg class="abs" style="left:0;top:0" width="800" height="596" viewBox="0 0 800 596"><rect x="787" y="39" width="13" height="531" fill="#fff"/><rect x="787" y="39" width="1.6" height="531" fill="#d4d4d4"/><rect x="798" y="39" width="2" height="531" fill="#e4e4e4"/><rect x="788.6" y="39.5" width="9.4" height="9.5" fill="#fff" stroke="#d0d0d0" stroke-width="0.6"/><path d="M791.2,45.6 L793.3,43.2 L795.4,45.6 Z" fill="#666"/><rect x="787.6" y="276.3" width="10" height="285.2" fill="#d2d2d2"/><rect x="797.6" y="276.3" width="2.4" height="285.2" fill="#dedede"/><rect x="788.6" y="562" width="9.4" height="8" fill="#fff" stroke="#d0d0d0" stroke-width="0.6"/><path d="M791.2,564.8 L793.3,567.2 L795.4,564.8 Z" fill="#666"/><rect x="0" y="570.4" width="800" height="12" fill="#e6e6e6"/><path d="M13,573.6 L10.6,576 L13,578.4 Z" fill="#217346"/><path d="M23,573.6 L25.4,576 L23,578.4 Z" fill="#217346"/><text x="33.50" y="578.00" text-anchor="start" fill="#217346" style="white-space:pre;font-size:7.39px;font-weight:bold;" textLength="5.87" lengthAdjust="spacingAndGlyphs">...</text><rect x="44.00" y="571.20" width="115.30" height="10.90" fill="#000"/><text x="101.65" y="579.60" text-anchor="middle" fill="#fff" style="white-space:pre;font-size:7.98px;" textLength="104.30" lengthAdjust="spacingAndGlyphs">Reserve Component Summary</text><rect x="161.20" y="571.20" width="104.50" height="10.90" fill="#000"/><text x="213.45" y="579.60" text-anchor="middle" fill="#fff" style="white-space:pre;font-size:7.85px;" textLength="93.50" lengthAdjust="spacingAndGlyphs">Reserve Component Details</text><rect x="268.50" y="571.20" width="42.20" height="10.90" fill="#000"/><text x="289.60" y="579.60" text-anchor="middle" fill="#fff" style="white-space:pre;font-size:7.19px;" textLength="31.20" lengthAdjust="spacingAndGlyphs">CompFFB</text><rect x="313.00" y="571.20" width="119.00" height="10.90" fill="#948a54"/><text x="372.50" y="579.60" text-anchor="middle" fill="#1a1a1a" style="white-space:pre;font-size:8.00px;" textLength="108.00" lengthAdjust="spacingAndGlyphs">Reserve Component Useful Life</text><rect x="434.30" y="571.20" width="125.20" height="10.90" fill="#948a54"/><text x="496.90" y="579.60" text-anchor="middle" fill="#1a1a1a" style="white-space:pre;font-size:7.99px;" textLength="114.20" lengthAdjust="spacingAndGlyphs">Reserve Component Maint Sched</text><rect x="561.70" y="571.20" width="105.70" height="10.90" fill="#60497a"/><text x="614.55" y="579.60" text-anchor="middle" fill="#fff" style="white-space:pre;font-size:8.17px;" textLength="94.70" lengthAdjust="spacingAndGlyphs">Community Summary Stats</text><text x="672.50" y="578.00" text-anchor="start" fill="#217346" style="white-space:pre;font-size:7.39px;font-weight:bold;" textLength="5.87" lengthAdjust="spacingAndGlyphs">...</text><circle cx="688.2" cy="576.2" r="3.6" fill="none" stroke="#777" stroke-width="0.7"/><path d="M686.2,576.2 H690.2 M688.2,574.2 V578.2" stroke="#777" stroke-width="0.7"/><rect x="700.6" y="573.5" width="0.9" height="0.9" fill="#9a9a9a"/><rect x="700.6" y="576" width="0.9" height="0.9" fill="#9a9a9a"/><rect x="700.6" y="578.5" width="0.9" height="0.9" fill="#9a9a9a"/><rect x="708" y="571" width="79" height="10.4" fill="#e2e2e2"/><rect x="708.4" y="571.3" width="8.4" height="9.8" fill="#fff" stroke="#cfcfcf" stroke-width="0.6"/><path d="M713.8,574 L711.4,576.2 L713.8,578.4 Z" fill="#555"/><rect x="718" y="571.3" width="37" height="9.8" fill="#fff" stroke="#cfcfcf" stroke-width="0.6"/><rect x="777.6" y="571.3" width="9" height="9.8" fill="#fff" stroke="#cfcfcf" stroke-width="0.6"/><path d="M781,574 L783.4,576.2 L781,578.4 Z" fill="#555"/><rect x="787" y="570" width="13" height="12.2" fill="#dadada"/><rect x="0" y="582.2" width="800" height="13.8" fill="#f3f3f3"/><g fill="none" stroke="#555" stroke-width="0.8"><rect x="4.6" y="586" width="7.6" height="6.4" rx="0.8"/><path d="M4.6,587.8 H12.2"/><circle cx="9.6" cy="590.4" r="1.5"/></g><rect x="615.5" y="582.4" width="23.3" height="13.6" fill="#c9c9c9"/><g fill="none" stroke="#444" stroke-width="0.7"><rect x="623.4" y="585.6" width="8.8" height="7.4"/><path d="M626.3,585.6 V593 M629.3,585.6 V593 M623.4,588 H632.2 M623.4,590.5 H632.2"/></g><g fill="none" stroke="#555" stroke-width="0.7"><rect x="646.4" y="585.6" width="8.8" height="7.4"/><rect x="648.6" y="587" width="4.4" height="6"/></g><g fill="none" stroke="#555" stroke-width="0.7"><rect x="670.4" y="585.6" width="8.8" height="7.4"/><path d="M672.8,585.6 V589.4 H676.8 V585.6"/></g><path d="M690,589.3 H694.4" stroke="#555" stroke-width="0.8"/><path d="M698.5,589.3 H757" stroke="#8a8a8a" stroke-width="0.7"/><rect x="722" y="585.6" width="2.6" height="7.4" fill="#555"/><path d="M730,588 V590.6" stroke="#8a8a8a" stroke-width="0.6"/><path d="M760.4,589.3 H765.2 M762.8,586.9 V591.7" stroke="#555" stroke-width="0.8"/><text x="772.50" y="592.00" text-anchor="start" fill="#555" style="white-space:pre;font-size:6.82px;" textLength="13.00" lengthAdjust="spacingAndGlyphs">85%</text></svg></div>
</div></body></html>
